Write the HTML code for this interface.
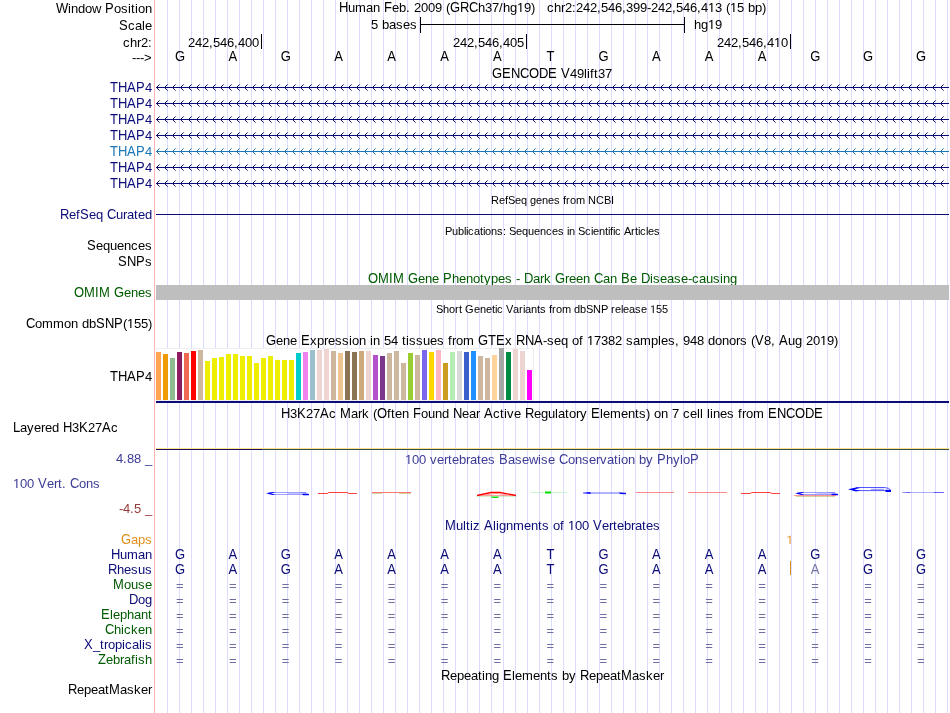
<!DOCTYPE html>
<html><head><meta charset="utf-8"><style>
html,body{margin:0;padding:0;background:#fff;width:950px;height:713px;overflow:hidden}
svg{display:block;font-family:"Liberation Sans",sans-serif;will-change:transform}
</style></head><body>
<svg width="950" height="713" viewBox="0 0 950 713">
<rect x="167" y="0" width="1" height="713" fill="#dcdcff"/>
<rect x="179" y="0" width="1" height="713" fill="#dcdcff"/>
<rect x="191" y="0" width="1" height="713" fill="#dcdcff"/>
<rect x="203" y="0" width="1" height="713" fill="#dcdcff"/>
<rect x="215" y="0" width="1" height="713" fill="#dcdcff"/>
<rect x="227" y="0" width="1" height="713" fill="#dcdcff"/>
<rect x="239" y="0" width="1" height="713" fill="#dcdcff"/>
<rect x="251" y="0" width="1" height="713" fill="#dcdcff"/>
<rect x="263" y="0" width="1" height="713" fill="#dcdcff"/>
<rect x="275" y="0" width="1" height="713" fill="#dcdcff"/>
<rect x="287" y="0" width="1" height="713" fill="#dcdcff"/>
<rect x="299" y="0" width="1" height="713" fill="#dcdcff"/>
<rect x="311" y="0" width="1" height="713" fill="#dcdcff"/>
<rect x="323" y="0" width="1" height="713" fill="#dcdcff"/>
<rect x="335" y="0" width="1" height="713" fill="#dcdcff"/>
<rect x="347" y="0" width="1" height="713" fill="#dcdcff"/>
<rect x="359" y="0" width="1" height="713" fill="#dcdcff"/>
<rect x="371" y="0" width="1" height="713" fill="#dcdcff"/>
<rect x="383" y="0" width="1" height="713" fill="#dcdcff"/>
<rect x="395" y="0" width="1" height="713" fill="#dcdcff"/>
<rect x="407" y="0" width="1" height="713" fill="#dcdcff"/>
<rect x="419" y="0" width="1" height="713" fill="#dcdcff"/>
<rect x="431" y="0" width="1" height="713" fill="#dcdcff"/>
<rect x="443" y="0" width="1" height="713" fill="#dcdcff"/>
<rect x="455" y="0" width="1" height="713" fill="#dcdcff"/>
<rect x="467" y="0" width="1" height="713" fill="#dcdcff"/>
<rect x="479" y="0" width="1" height="713" fill="#dcdcff"/>
<rect x="491" y="0" width="1" height="713" fill="#dcdcff"/>
<rect x="503" y="0" width="1" height="713" fill="#dcdcff"/>
<rect x="515" y="0" width="1" height="713" fill="#dcdcff"/>
<rect x="527" y="0" width="1" height="713" fill="#dcdcff"/>
<rect x="539" y="0" width="1" height="713" fill="#dcdcff"/>
<rect x="551" y="0" width="1" height="713" fill="#dcdcff"/>
<rect x="563" y="0" width="1" height="713" fill="#dcdcff"/>
<rect x="575" y="0" width="1" height="713" fill="#dcdcff"/>
<rect x="587" y="0" width="1" height="713" fill="#dcdcff"/>
<rect x="599" y="0" width="1" height="713" fill="#dcdcff"/>
<rect x="611" y="0" width="1" height="713" fill="#dcdcff"/>
<rect x="623" y="0" width="1" height="713" fill="#dcdcff"/>
<rect x="635" y="0" width="1" height="713" fill="#dcdcff"/>
<rect x="647" y="0" width="1" height="713" fill="#dcdcff"/>
<rect x="659" y="0" width="1" height="713" fill="#dcdcff"/>
<rect x="671" y="0" width="1" height="713" fill="#dcdcff"/>
<rect x="683" y="0" width="1" height="713" fill="#dcdcff"/>
<rect x="695" y="0" width="1" height="713" fill="#dcdcff"/>
<rect x="707" y="0" width="1" height="713" fill="#dcdcff"/>
<rect x="719" y="0" width="1" height="713" fill="#dcdcff"/>
<rect x="731" y="0" width="1" height="713" fill="#dcdcff"/>
<rect x="743" y="0" width="1" height="713" fill="#dcdcff"/>
<rect x="755" y="0" width="1" height="713" fill="#dcdcff"/>
<rect x="767" y="0" width="1" height="713" fill="#dcdcff"/>
<rect x="779" y="0" width="1" height="713" fill="#dcdcff"/>
<rect x="791" y="0" width="1" height="713" fill="#dcdcff"/>
<rect x="803" y="0" width="1" height="713" fill="#dcdcff"/>
<rect x="815" y="0" width="1" height="713" fill="#dcdcff"/>
<rect x="827" y="0" width="1" height="713" fill="#dcdcff"/>
<rect x="839" y="0" width="1" height="713" fill="#dcdcff"/>
<rect x="851" y="0" width="1" height="713" fill="#dcdcff"/>
<rect x="863" y="0" width="1" height="713" fill="#dcdcff"/>
<rect x="875" y="0" width="1" height="713" fill="#dcdcff"/>
<rect x="887" y="0" width="1" height="713" fill="#dcdcff"/>
<rect x="899" y="0" width="1" height="713" fill="#dcdcff"/>
<rect x="911" y="0" width="1" height="713" fill="#dcdcff"/>
<rect x="923" y="0" width="1" height="713" fill="#dcdcff"/>
<rect x="935" y="0" width="1" height="713" fill="#dcdcff"/>
<rect x="947" y="0" width="1" height="713" fill="#dcdcff"/>
<rect x="154" y="0" width="1" height="713" fill="#ffb4b4"/>
<text x="68 71 78 85 92 114 121 128 131 135 138 145" y="13" fill="#000" font-size="13">indowosition</text>
<text transform="matrix(1 0 0 1.08 0 -1.040)" x="56 105" y="13" fill="#000" font-size="13">WP</text>
<path d="M515 0L515 1237L197 1010L197 1180L530 1409L696 1409L696 0Z" transform="matrix(0.006348 0 0 -0.006348 517 12)" fill="#000"/>
<text x="348 355 366 373 392 399 406 414 421 428 435 446 478 485 492 499 503 510 524 531" y="12" fill="#000" font-size="13">umaneb.2009(h37/hg9)</text>
<text transform="matrix(1 0 0 1.08 0 -0.960)" x="339 384 450 460 469" y="12" fill="#000" font-size="13">HFGRC</text>
<path d="M515 0L515 1237L197 1010L197 1180L530 1409L696 1409L696 0Z" transform="matrix(0.006348 0 0 -0.006348 708 12)" fill="#000"/>
<path d="M515 0L515 1237L197 1010L197 1180L530 1409L696 1409L696 0Z" transform="matrix(0.006348 0 0 -0.006348 730 12)" fill="#000"/>
<text x="547 554 561 565 572 576 583 590 597 601 608 615 622 626 633 640 647 651 658 665 672 676 683 690 697 701 715 726 737 748 755 762" y="12" fill="#000" font-size="13">chr2:242,546,399-242,546,43(5bp)</text>
<text x="128 135 142 145" y="30" fill="#000" font-size="13">cale</text>
<text transform="matrix(1 0 0 1.08 0 -2.400)" x="119" y="30" fill="#000" font-size="13">S</text>
<text x="371 382 389 396 403 410" y="29" fill="#000" font-size="13">5bases</text>
<rect x="420" y="24" width="265" height="1" fill="#000"/>
<rect x="420" y="17" width="1" height="16" fill="#000"/>
<rect x="684" y="17" width="1" height="16" fill="#000"/>
<path d="M515 0L515 1237L197 1010L197 1180L530 1409L696 1409L696 0Z" transform="matrix(0.006348 0 0 -0.006348 708 29)" fill="#000"/>
<text x="694 701 715" y="29" fill="#000" font-size="13">hg9</text>
<text x="123 130 137 141 148" y="47" fill="#000" font-size="13">chr2:</text>
<text x="188 195 202 209 213 220 227 234 238 245 252" y="47" fill="#000" font-size="13">242,546,400</text>
<rect x="261" y="34" width="1" height="15" fill="#000"/>
<text x="453 460 467 474 478 485 492 499 503 510 517" y="47" fill="#000" font-size="13">242,546,405</text>
<rect x="526" y="34" width="1" height="15" fill="#000"/>
<path d="M515 0L515 1237L197 1010L197 1180L530 1409L696 1409L696 0Z" transform="matrix(0.006348 0 0 -0.006348 774 47)" fill="#000"/>
<text x="717 724 731 738 742 749 756 763 767 781" y="47" fill="#000" font-size="13">242,546,40</text>
<rect x="790" y="34" width="1" height="15" fill="#000"/>
<text x="132 136 140 144" y="62" fill="#000" font-size="13">---&gt;</text>
<text transform="matrix(1 0 0 1.08 0 -4.880)" x="175" y="61" fill="#000" font-size="13">G</text>
<text transform="matrix(1 0 0 1.08 0 -4.880)" x="228.433" y="61" fill="#000" font-size="13">A</text>
<text transform="matrix(1 0 0 1.08 0 -4.880)" x="280.867" y="61" fill="#000" font-size="13">G</text>
<text transform="matrix(1 0 0 1.08 0 -4.880)" x="334.3" y="61" fill="#000" font-size="13">A</text>
<text transform="matrix(1 0 0 1.08 0 -4.880)" x="387.233" y="61" fill="#000" font-size="13">A</text>
<text transform="matrix(1 0 0 1.08 0 -4.880)" x="440.167" y="61" fill="#000" font-size="13">A</text>
<text transform="matrix(1 0 0 1.08 0 -4.880)" x="493.1" y="61" fill="#000" font-size="13">A</text>
<text transform="matrix(1 0 0 1.08 0 -4.880)" x="546.533" y="61" fill="#000" font-size="13">T</text>
<text transform="matrix(1 0 0 1.08 0 -4.880)" x="598.467" y="61" fill="#000" font-size="13">G</text>
<text transform="matrix(1 0 0 1.08 0 -4.880)" x="651.9" y="61" fill="#000" font-size="13">A</text>
<text transform="matrix(1 0 0 1.08 0 -4.880)" x="704.833" y="61" fill="#000" font-size="13">A</text>
<text transform="matrix(1 0 0 1.08 0 -4.880)" x="757.767" y="61" fill="#000" font-size="13">A</text>
<text transform="matrix(1 0 0 1.08 0 -4.880)" x="810.2" y="61" fill="#000" font-size="13">G</text>
<text transform="matrix(1 0 0 1.08 0 -4.880)" x="863.133" y="61" fill="#000" font-size="13">G</text>
<text transform="matrix(1 0 0 1.08 0 -4.880)" x="916.067" y="61" fill="#000" font-size="13">G</text>
<text x="570 577 584 587 590 594 598 605" y="78" fill="#000" font-size="13">49lift37</text>
<text transform="matrix(1 0 0 1.08 0 -6.240)" x="492 502 511 520 529 539 548 561" y="78" fill="#000" font-size="13">GENCODEV</text>
<text x="145" y="92" fill="#0c0c78" font-size="13">4</text>
<text transform="matrix(1 0 0 1.08 0 -7.360)" x="110 118 127 136" y="92" fill="#0c0c78" font-size="13">THAP</text>
<rect x="156" y="87" width="793" height="1" fill="#0c0c78"/>
<g transform="translate(0 87)" fill="#0c0c78"><path d="M157 -1h1v3h-1zM158 -2h1v1h-1zM158 2h1v1h-1zM165 -1h1v3h-1zM166 -2h1v1h-1zM166 2h1v1h-1zM173 -1h1v3h-1zM174 -2h1v1h-1zM174 2h1v1h-1zM181 -1h1v3h-1zM182 -2h1v1h-1zM182 2h1v1h-1zM189 -1h1v3h-1zM190 -2h1v1h-1zM190 2h1v1h-1zM197 -1h1v3h-1zM198 -2h1v1h-1zM198 2h1v1h-1zM205 -1h1v3h-1zM206 -2h1v1h-1zM206 2h1v1h-1zM213 -1h1v3h-1zM214 -2h1v1h-1zM214 2h1v1h-1zM221 -1h1v3h-1zM222 -2h1v1h-1zM222 2h1v1h-1zM229 -1h1v3h-1zM230 -2h1v1h-1zM230 2h1v1h-1zM237 -1h1v3h-1zM238 -2h1v1h-1zM238 2h1v1h-1zM245 -1h1v3h-1zM246 -2h1v1h-1zM246 2h1v1h-1zM253 -1h1v3h-1zM254 -2h1v1h-1zM254 2h1v1h-1zM261 -1h1v3h-1zM262 -2h1v1h-1zM262 2h1v1h-1zM269 -1h1v3h-1zM270 -2h1v1h-1zM270 2h1v1h-1zM277 -1h1v3h-1zM278 -2h1v1h-1zM278 2h1v1h-1zM285 -1h1v3h-1zM286 -2h1v1h-1zM286 2h1v1h-1zM293 -1h1v3h-1zM294 -2h1v1h-1zM294 2h1v1h-1zM301 -1h1v3h-1zM302 -2h1v1h-1zM302 2h1v1h-1zM309 -1h1v3h-1zM310 -2h1v1h-1zM310 2h1v1h-1zM317 -1h1v3h-1zM318 -2h1v1h-1zM318 2h1v1h-1zM325 -1h1v3h-1zM326 -2h1v1h-1zM326 2h1v1h-1zM333 -1h1v3h-1zM334 -2h1v1h-1zM334 2h1v1h-1zM341 -1h1v3h-1zM342 -2h1v1h-1zM342 2h1v1h-1zM349 -1h1v3h-1zM350 -2h1v1h-1zM350 2h1v1h-1zM357 -1h1v3h-1zM358 -2h1v1h-1zM358 2h1v1h-1zM365 -1h1v3h-1zM366 -2h1v1h-1zM366 2h1v1h-1zM373 -1h1v3h-1zM374 -2h1v1h-1zM374 2h1v1h-1zM381 -1h1v3h-1zM382 -2h1v1h-1zM382 2h1v1h-1zM389 -1h1v3h-1zM390 -2h1v1h-1zM390 2h1v1h-1zM397 -1h1v3h-1zM398 -2h1v1h-1zM398 2h1v1h-1zM405 -1h1v3h-1zM406 -2h1v1h-1zM406 2h1v1h-1zM413 -1h1v3h-1zM414 -2h1v1h-1zM414 2h1v1h-1zM421 -1h1v3h-1zM422 -2h1v1h-1zM422 2h1v1h-1zM429 -1h1v3h-1zM430 -2h1v1h-1zM430 2h1v1h-1zM437 -1h1v3h-1zM438 -2h1v1h-1zM438 2h1v1h-1zM445 -1h1v3h-1zM446 -2h1v1h-1zM446 2h1v1h-1zM453 -1h1v3h-1zM454 -2h1v1h-1zM454 2h1v1h-1zM461 -1h1v3h-1zM462 -2h1v1h-1zM462 2h1v1h-1zM469 -1h1v3h-1zM470 -2h1v1h-1zM470 2h1v1h-1zM477 -1h1v3h-1zM478 -2h1v1h-1zM478 2h1v1h-1zM485 -1h1v3h-1zM486 -2h1v1h-1zM486 2h1v1h-1zM493 -1h1v3h-1zM494 -2h1v1h-1zM494 2h1v1h-1zM501 -1h1v3h-1zM502 -2h1v1h-1zM502 2h1v1h-1zM509 -1h1v3h-1zM510 -2h1v1h-1zM510 2h1v1h-1zM517 -1h1v3h-1zM518 -2h1v1h-1zM518 2h1v1h-1zM525 -1h1v3h-1zM526 -2h1v1h-1zM526 2h1v1h-1zM533 -1h1v3h-1zM534 -2h1v1h-1zM534 2h1v1h-1zM541 -1h1v3h-1zM542 -2h1v1h-1zM542 2h1v1h-1zM549 -1h1v3h-1zM550 -2h1v1h-1zM550 2h1v1h-1zM557 -1h1v3h-1zM558 -2h1v1h-1zM558 2h1v1h-1zM565 -1h1v3h-1zM566 -2h1v1h-1zM566 2h1v1h-1zM573 -1h1v3h-1zM574 -2h1v1h-1zM574 2h1v1h-1zM581 -1h1v3h-1zM582 -2h1v1h-1zM582 2h1v1h-1zM589 -1h1v3h-1zM590 -2h1v1h-1zM590 2h1v1h-1zM597 -1h1v3h-1zM598 -2h1v1h-1zM598 2h1v1h-1zM605 -1h1v3h-1zM606 -2h1v1h-1zM606 2h1v1h-1zM613 -1h1v3h-1zM614 -2h1v1h-1zM614 2h1v1h-1zM621 -1h1v3h-1zM622 -2h1v1h-1zM622 2h1v1h-1zM629 -1h1v3h-1zM630 -2h1v1h-1zM630 2h1v1h-1zM637 -1h1v3h-1zM638 -2h1v1h-1zM638 2h1v1h-1zM645 -1h1v3h-1zM646 -2h1v1h-1zM646 2h1v1h-1zM653 -1h1v3h-1zM654 -2h1v1h-1zM654 2h1v1h-1zM661 -1h1v3h-1zM662 -2h1v1h-1zM662 2h1v1h-1zM669 -1h1v3h-1zM670 -2h1v1h-1zM670 2h1v1h-1zM677 -1h1v3h-1zM678 -2h1v1h-1zM678 2h1v1h-1zM685 -1h1v3h-1zM686 -2h1v1h-1zM686 2h1v1h-1zM693 -1h1v3h-1zM694 -2h1v1h-1zM694 2h1v1h-1zM701 -1h1v3h-1zM702 -2h1v1h-1zM702 2h1v1h-1zM709 -1h1v3h-1zM710 -2h1v1h-1zM710 2h1v1h-1zM717 -1h1v3h-1zM718 -2h1v1h-1zM718 2h1v1h-1zM725 -1h1v3h-1zM726 -2h1v1h-1zM726 2h1v1h-1zM733 -1h1v3h-1zM734 -2h1v1h-1zM734 2h1v1h-1zM741 -1h1v3h-1zM742 -2h1v1h-1zM742 2h1v1h-1zM749 -1h1v3h-1zM750 -2h1v1h-1zM750 2h1v1h-1zM757 -1h1v3h-1zM758 -2h1v1h-1zM758 2h1v1h-1zM765 -1h1v3h-1zM766 -2h1v1h-1zM766 2h1v1h-1zM773 -1h1v3h-1zM774 -2h1v1h-1zM774 2h1v1h-1zM781 -1h1v3h-1zM782 -2h1v1h-1zM782 2h1v1h-1zM789 -1h1v3h-1zM790 -2h1v1h-1zM790 2h1v1h-1zM797 -1h1v3h-1zM798 -2h1v1h-1zM798 2h1v1h-1zM805 -1h1v3h-1zM806 -2h1v1h-1zM806 2h1v1h-1zM813 -1h1v3h-1zM814 -2h1v1h-1zM814 2h1v1h-1zM821 -1h1v3h-1zM822 -2h1v1h-1zM822 2h1v1h-1zM829 -1h1v3h-1zM830 -2h1v1h-1zM830 2h1v1h-1zM837 -1h1v3h-1zM838 -2h1v1h-1zM838 2h1v1h-1zM845 -1h1v3h-1zM846 -2h1v1h-1zM846 2h1v1h-1zM853 -1h1v3h-1zM854 -2h1v1h-1zM854 2h1v1h-1zM861 -1h1v3h-1zM862 -2h1v1h-1zM862 2h1v1h-1zM869 -1h1v3h-1zM870 -2h1v1h-1zM870 2h1v1h-1zM877 -1h1v3h-1zM878 -2h1v1h-1zM878 2h1v1h-1zM885 -1h1v3h-1zM886 -2h1v1h-1zM886 2h1v1h-1zM893 -1h1v3h-1zM894 -2h1v1h-1zM894 2h1v1h-1zM901 -1h1v3h-1zM902 -2h1v1h-1zM902 2h1v1h-1zM909 -1h1v3h-1zM910 -2h1v1h-1zM910 2h1v1h-1zM917 -1h1v3h-1zM918 -2h1v1h-1zM918 2h1v1h-1zM925 -1h1v3h-1zM926 -2h1v1h-1zM926 2h1v1h-1zM933 -1h1v3h-1zM934 -2h1v1h-1zM934 2h1v1h-1zM941 -1h1v3h-1zM942 -2h1v1h-1zM942 2h1v1h-1z"/><path d="M159 -3h1v1h-1zM159 3h1v1h-1zM167 -3h1v1h-1zM167 3h1v1h-1zM175 -3h1v1h-1zM175 3h1v1h-1zM183 -3h1v1h-1zM183 3h1v1h-1zM191 -3h1v1h-1zM191 3h1v1h-1zM199 -3h1v1h-1zM199 3h1v1h-1zM207 -3h1v1h-1zM207 3h1v1h-1zM215 -3h1v1h-1zM215 3h1v1h-1zM223 -3h1v1h-1zM223 3h1v1h-1zM231 -3h1v1h-1zM231 3h1v1h-1zM239 -3h1v1h-1zM239 3h1v1h-1zM247 -3h1v1h-1zM247 3h1v1h-1zM255 -3h1v1h-1zM255 3h1v1h-1zM263 -3h1v1h-1zM263 3h1v1h-1zM271 -3h1v1h-1zM271 3h1v1h-1zM279 -3h1v1h-1zM279 3h1v1h-1zM287 -3h1v1h-1zM287 3h1v1h-1zM295 -3h1v1h-1zM295 3h1v1h-1zM303 -3h1v1h-1zM303 3h1v1h-1zM311 -3h1v1h-1zM311 3h1v1h-1zM319 -3h1v1h-1zM319 3h1v1h-1zM327 -3h1v1h-1zM327 3h1v1h-1zM335 -3h1v1h-1zM335 3h1v1h-1zM343 -3h1v1h-1zM343 3h1v1h-1zM351 -3h1v1h-1zM351 3h1v1h-1zM359 -3h1v1h-1zM359 3h1v1h-1zM367 -3h1v1h-1zM367 3h1v1h-1zM375 -3h1v1h-1zM375 3h1v1h-1zM383 -3h1v1h-1zM383 3h1v1h-1zM391 -3h1v1h-1zM391 3h1v1h-1zM399 -3h1v1h-1zM399 3h1v1h-1zM407 -3h1v1h-1zM407 3h1v1h-1zM415 -3h1v1h-1zM415 3h1v1h-1zM423 -3h1v1h-1zM423 3h1v1h-1zM431 -3h1v1h-1zM431 3h1v1h-1zM439 -3h1v1h-1zM439 3h1v1h-1zM447 -3h1v1h-1zM447 3h1v1h-1zM455 -3h1v1h-1zM455 3h1v1h-1zM463 -3h1v1h-1zM463 3h1v1h-1zM471 -3h1v1h-1zM471 3h1v1h-1zM479 -3h1v1h-1zM479 3h1v1h-1zM487 -3h1v1h-1zM487 3h1v1h-1zM495 -3h1v1h-1zM495 3h1v1h-1zM503 -3h1v1h-1zM503 3h1v1h-1zM511 -3h1v1h-1zM511 3h1v1h-1zM519 -3h1v1h-1zM519 3h1v1h-1zM527 -3h1v1h-1zM527 3h1v1h-1zM535 -3h1v1h-1zM535 3h1v1h-1zM543 -3h1v1h-1zM543 3h1v1h-1zM551 -3h1v1h-1zM551 3h1v1h-1zM559 -3h1v1h-1zM559 3h1v1h-1zM567 -3h1v1h-1zM567 3h1v1h-1zM575 -3h1v1h-1zM575 3h1v1h-1zM583 -3h1v1h-1zM583 3h1v1h-1zM591 -3h1v1h-1zM591 3h1v1h-1zM599 -3h1v1h-1zM599 3h1v1h-1zM607 -3h1v1h-1zM607 3h1v1h-1zM615 -3h1v1h-1zM615 3h1v1h-1zM623 -3h1v1h-1zM623 3h1v1h-1zM631 -3h1v1h-1zM631 3h1v1h-1zM639 -3h1v1h-1zM639 3h1v1h-1zM647 -3h1v1h-1zM647 3h1v1h-1zM655 -3h1v1h-1zM655 3h1v1h-1zM663 -3h1v1h-1zM663 3h1v1h-1zM671 -3h1v1h-1zM671 3h1v1h-1zM679 -3h1v1h-1zM679 3h1v1h-1zM687 -3h1v1h-1zM687 3h1v1h-1zM695 -3h1v1h-1zM695 3h1v1h-1zM703 -3h1v1h-1zM703 3h1v1h-1zM711 -3h1v1h-1zM711 3h1v1h-1zM719 -3h1v1h-1zM719 3h1v1h-1zM727 -3h1v1h-1zM727 3h1v1h-1zM735 -3h1v1h-1zM735 3h1v1h-1zM743 -3h1v1h-1zM743 3h1v1h-1zM751 -3h1v1h-1zM751 3h1v1h-1zM759 -3h1v1h-1zM759 3h1v1h-1zM767 -3h1v1h-1zM767 3h1v1h-1zM775 -3h1v1h-1zM775 3h1v1h-1zM783 -3h1v1h-1zM783 3h1v1h-1zM791 -3h1v1h-1zM791 3h1v1h-1zM799 -3h1v1h-1zM799 3h1v1h-1zM807 -3h1v1h-1zM807 3h1v1h-1zM815 -3h1v1h-1zM815 3h1v1h-1zM823 -3h1v1h-1zM823 3h1v1h-1zM831 -3h1v1h-1zM831 3h1v1h-1zM839 -3h1v1h-1zM839 3h1v1h-1zM847 -3h1v1h-1zM847 3h1v1h-1zM855 -3h1v1h-1zM855 3h1v1h-1zM863 -3h1v1h-1zM863 3h1v1h-1zM871 -3h1v1h-1zM871 3h1v1h-1zM879 -3h1v1h-1zM879 3h1v1h-1zM887 -3h1v1h-1zM887 3h1v1h-1zM895 -3h1v1h-1zM895 3h1v1h-1zM903 -3h1v1h-1zM903 3h1v1h-1zM911 -3h1v1h-1zM911 3h1v1h-1zM919 -3h1v1h-1zM919 3h1v1h-1zM927 -3h1v1h-1zM927 3h1v1h-1zM935 -3h1v1h-1zM935 3h1v1h-1zM943 -3h1v1h-1zM943 3h1v1h-1z" fill-opacity="0.6"/></g>
<text x="145" y="108" fill="#0c0c78" font-size="13">4</text>
<text transform="matrix(1 0 0 1.08 0 -8.640)" x="110 118 127 136" y="108" fill="#0c0c78" font-size="13">THAP</text>
<rect x="156" y="103" width="793" height="1" fill="#0c0c78"/>
<g transform="translate(0 103)" fill="#0c0c78"><path d="M157 -1h1v3h-1zM158 -2h1v1h-1zM158 2h1v1h-1zM165 -1h1v3h-1zM166 -2h1v1h-1zM166 2h1v1h-1zM173 -1h1v3h-1zM174 -2h1v1h-1zM174 2h1v1h-1zM181 -1h1v3h-1zM182 -2h1v1h-1zM182 2h1v1h-1zM189 -1h1v3h-1zM190 -2h1v1h-1zM190 2h1v1h-1zM197 -1h1v3h-1zM198 -2h1v1h-1zM198 2h1v1h-1zM205 -1h1v3h-1zM206 -2h1v1h-1zM206 2h1v1h-1zM213 -1h1v3h-1zM214 -2h1v1h-1zM214 2h1v1h-1zM221 -1h1v3h-1zM222 -2h1v1h-1zM222 2h1v1h-1zM229 -1h1v3h-1zM230 -2h1v1h-1zM230 2h1v1h-1zM237 -1h1v3h-1zM238 -2h1v1h-1zM238 2h1v1h-1zM245 -1h1v3h-1zM246 -2h1v1h-1zM246 2h1v1h-1zM253 -1h1v3h-1zM254 -2h1v1h-1zM254 2h1v1h-1zM261 -1h1v3h-1zM262 -2h1v1h-1zM262 2h1v1h-1zM269 -1h1v3h-1zM270 -2h1v1h-1zM270 2h1v1h-1zM277 -1h1v3h-1zM278 -2h1v1h-1zM278 2h1v1h-1zM285 -1h1v3h-1zM286 -2h1v1h-1zM286 2h1v1h-1zM293 -1h1v3h-1zM294 -2h1v1h-1zM294 2h1v1h-1zM301 -1h1v3h-1zM302 -2h1v1h-1zM302 2h1v1h-1zM309 -1h1v3h-1zM310 -2h1v1h-1zM310 2h1v1h-1zM317 -1h1v3h-1zM318 -2h1v1h-1zM318 2h1v1h-1zM325 -1h1v3h-1zM326 -2h1v1h-1zM326 2h1v1h-1zM333 -1h1v3h-1zM334 -2h1v1h-1zM334 2h1v1h-1zM341 -1h1v3h-1zM342 -2h1v1h-1zM342 2h1v1h-1zM349 -1h1v3h-1zM350 -2h1v1h-1zM350 2h1v1h-1zM357 -1h1v3h-1zM358 -2h1v1h-1zM358 2h1v1h-1zM365 -1h1v3h-1zM366 -2h1v1h-1zM366 2h1v1h-1zM373 -1h1v3h-1zM374 -2h1v1h-1zM374 2h1v1h-1zM381 -1h1v3h-1zM382 -2h1v1h-1zM382 2h1v1h-1zM389 -1h1v3h-1zM390 -2h1v1h-1zM390 2h1v1h-1zM397 -1h1v3h-1zM398 -2h1v1h-1zM398 2h1v1h-1zM405 -1h1v3h-1zM406 -2h1v1h-1zM406 2h1v1h-1zM413 -1h1v3h-1zM414 -2h1v1h-1zM414 2h1v1h-1zM421 -1h1v3h-1zM422 -2h1v1h-1zM422 2h1v1h-1zM429 -1h1v3h-1zM430 -2h1v1h-1zM430 2h1v1h-1zM437 -1h1v3h-1zM438 -2h1v1h-1zM438 2h1v1h-1zM445 -1h1v3h-1zM446 -2h1v1h-1zM446 2h1v1h-1zM453 -1h1v3h-1zM454 -2h1v1h-1zM454 2h1v1h-1zM461 -1h1v3h-1zM462 -2h1v1h-1zM462 2h1v1h-1zM469 -1h1v3h-1zM470 -2h1v1h-1zM470 2h1v1h-1zM477 -1h1v3h-1zM478 -2h1v1h-1zM478 2h1v1h-1zM485 -1h1v3h-1zM486 -2h1v1h-1zM486 2h1v1h-1zM493 -1h1v3h-1zM494 -2h1v1h-1zM494 2h1v1h-1zM501 -1h1v3h-1zM502 -2h1v1h-1zM502 2h1v1h-1zM509 -1h1v3h-1zM510 -2h1v1h-1zM510 2h1v1h-1zM517 -1h1v3h-1zM518 -2h1v1h-1zM518 2h1v1h-1zM525 -1h1v3h-1zM526 -2h1v1h-1zM526 2h1v1h-1zM533 -1h1v3h-1zM534 -2h1v1h-1zM534 2h1v1h-1zM541 -1h1v3h-1zM542 -2h1v1h-1zM542 2h1v1h-1zM549 -1h1v3h-1zM550 -2h1v1h-1zM550 2h1v1h-1zM557 -1h1v3h-1zM558 -2h1v1h-1zM558 2h1v1h-1zM565 -1h1v3h-1zM566 -2h1v1h-1zM566 2h1v1h-1zM573 -1h1v3h-1zM574 -2h1v1h-1zM574 2h1v1h-1zM581 -1h1v3h-1zM582 -2h1v1h-1zM582 2h1v1h-1zM589 -1h1v3h-1zM590 -2h1v1h-1zM590 2h1v1h-1zM597 -1h1v3h-1zM598 -2h1v1h-1zM598 2h1v1h-1zM605 -1h1v3h-1zM606 -2h1v1h-1zM606 2h1v1h-1zM613 -1h1v3h-1zM614 -2h1v1h-1zM614 2h1v1h-1zM621 -1h1v3h-1zM622 -2h1v1h-1zM622 2h1v1h-1zM629 -1h1v3h-1zM630 -2h1v1h-1zM630 2h1v1h-1zM637 -1h1v3h-1zM638 -2h1v1h-1zM638 2h1v1h-1zM645 -1h1v3h-1zM646 -2h1v1h-1zM646 2h1v1h-1zM653 -1h1v3h-1zM654 -2h1v1h-1zM654 2h1v1h-1zM661 -1h1v3h-1zM662 -2h1v1h-1zM662 2h1v1h-1zM669 -1h1v3h-1zM670 -2h1v1h-1zM670 2h1v1h-1zM677 -1h1v3h-1zM678 -2h1v1h-1zM678 2h1v1h-1zM685 -1h1v3h-1zM686 -2h1v1h-1zM686 2h1v1h-1zM693 -1h1v3h-1zM694 -2h1v1h-1zM694 2h1v1h-1zM701 -1h1v3h-1zM702 -2h1v1h-1zM702 2h1v1h-1zM709 -1h1v3h-1zM710 -2h1v1h-1zM710 2h1v1h-1zM717 -1h1v3h-1zM718 -2h1v1h-1zM718 2h1v1h-1zM725 -1h1v3h-1zM726 -2h1v1h-1zM726 2h1v1h-1zM733 -1h1v3h-1zM734 -2h1v1h-1zM734 2h1v1h-1zM741 -1h1v3h-1zM742 -2h1v1h-1zM742 2h1v1h-1zM749 -1h1v3h-1zM750 -2h1v1h-1zM750 2h1v1h-1zM757 -1h1v3h-1zM758 -2h1v1h-1zM758 2h1v1h-1zM765 -1h1v3h-1zM766 -2h1v1h-1zM766 2h1v1h-1zM773 -1h1v3h-1zM774 -2h1v1h-1zM774 2h1v1h-1zM781 -1h1v3h-1zM782 -2h1v1h-1zM782 2h1v1h-1zM789 -1h1v3h-1zM790 -2h1v1h-1zM790 2h1v1h-1zM797 -1h1v3h-1zM798 -2h1v1h-1zM798 2h1v1h-1zM805 -1h1v3h-1zM806 -2h1v1h-1zM806 2h1v1h-1zM813 -1h1v3h-1zM814 -2h1v1h-1zM814 2h1v1h-1zM821 -1h1v3h-1zM822 -2h1v1h-1zM822 2h1v1h-1zM829 -1h1v3h-1zM830 -2h1v1h-1zM830 2h1v1h-1zM837 -1h1v3h-1zM838 -2h1v1h-1zM838 2h1v1h-1zM845 -1h1v3h-1zM846 -2h1v1h-1zM846 2h1v1h-1zM853 -1h1v3h-1zM854 -2h1v1h-1zM854 2h1v1h-1zM861 -1h1v3h-1zM862 -2h1v1h-1zM862 2h1v1h-1zM869 -1h1v3h-1zM870 -2h1v1h-1zM870 2h1v1h-1zM877 -1h1v3h-1zM878 -2h1v1h-1zM878 2h1v1h-1zM885 -1h1v3h-1zM886 -2h1v1h-1zM886 2h1v1h-1zM893 -1h1v3h-1zM894 -2h1v1h-1zM894 2h1v1h-1zM901 -1h1v3h-1zM902 -2h1v1h-1zM902 2h1v1h-1zM909 -1h1v3h-1zM910 -2h1v1h-1zM910 2h1v1h-1zM917 -1h1v3h-1zM918 -2h1v1h-1zM918 2h1v1h-1zM925 -1h1v3h-1zM926 -2h1v1h-1zM926 2h1v1h-1zM933 -1h1v3h-1zM934 -2h1v1h-1zM934 2h1v1h-1zM941 -1h1v3h-1zM942 -2h1v1h-1zM942 2h1v1h-1z"/><path d="M159 -3h1v1h-1zM159 3h1v1h-1zM167 -3h1v1h-1zM167 3h1v1h-1zM175 -3h1v1h-1zM175 3h1v1h-1zM183 -3h1v1h-1zM183 3h1v1h-1zM191 -3h1v1h-1zM191 3h1v1h-1zM199 -3h1v1h-1zM199 3h1v1h-1zM207 -3h1v1h-1zM207 3h1v1h-1zM215 -3h1v1h-1zM215 3h1v1h-1zM223 -3h1v1h-1zM223 3h1v1h-1zM231 -3h1v1h-1zM231 3h1v1h-1zM239 -3h1v1h-1zM239 3h1v1h-1zM247 -3h1v1h-1zM247 3h1v1h-1zM255 -3h1v1h-1zM255 3h1v1h-1zM263 -3h1v1h-1zM263 3h1v1h-1zM271 -3h1v1h-1zM271 3h1v1h-1zM279 -3h1v1h-1zM279 3h1v1h-1zM287 -3h1v1h-1zM287 3h1v1h-1zM295 -3h1v1h-1zM295 3h1v1h-1zM303 -3h1v1h-1zM303 3h1v1h-1zM311 -3h1v1h-1zM311 3h1v1h-1zM319 -3h1v1h-1zM319 3h1v1h-1zM327 -3h1v1h-1zM327 3h1v1h-1zM335 -3h1v1h-1zM335 3h1v1h-1zM343 -3h1v1h-1zM343 3h1v1h-1zM351 -3h1v1h-1zM351 3h1v1h-1zM359 -3h1v1h-1zM359 3h1v1h-1zM367 -3h1v1h-1zM367 3h1v1h-1zM375 -3h1v1h-1zM375 3h1v1h-1zM383 -3h1v1h-1zM383 3h1v1h-1zM391 -3h1v1h-1zM391 3h1v1h-1zM399 -3h1v1h-1zM399 3h1v1h-1zM407 -3h1v1h-1zM407 3h1v1h-1zM415 -3h1v1h-1zM415 3h1v1h-1zM423 -3h1v1h-1zM423 3h1v1h-1zM431 -3h1v1h-1zM431 3h1v1h-1zM439 -3h1v1h-1zM439 3h1v1h-1zM447 -3h1v1h-1zM447 3h1v1h-1zM455 -3h1v1h-1zM455 3h1v1h-1zM463 -3h1v1h-1zM463 3h1v1h-1zM471 -3h1v1h-1zM471 3h1v1h-1zM479 -3h1v1h-1zM479 3h1v1h-1zM487 -3h1v1h-1zM487 3h1v1h-1zM495 -3h1v1h-1zM495 3h1v1h-1zM503 -3h1v1h-1zM503 3h1v1h-1zM511 -3h1v1h-1zM511 3h1v1h-1zM519 -3h1v1h-1zM519 3h1v1h-1zM527 -3h1v1h-1zM527 3h1v1h-1zM535 -3h1v1h-1zM535 3h1v1h-1zM543 -3h1v1h-1zM543 3h1v1h-1zM551 -3h1v1h-1zM551 3h1v1h-1zM559 -3h1v1h-1zM559 3h1v1h-1zM567 -3h1v1h-1zM567 3h1v1h-1zM575 -3h1v1h-1zM575 3h1v1h-1zM583 -3h1v1h-1zM583 3h1v1h-1zM591 -3h1v1h-1zM591 3h1v1h-1zM599 -3h1v1h-1zM599 3h1v1h-1zM607 -3h1v1h-1zM607 3h1v1h-1zM615 -3h1v1h-1zM615 3h1v1h-1zM623 -3h1v1h-1zM623 3h1v1h-1zM631 -3h1v1h-1zM631 3h1v1h-1zM639 -3h1v1h-1zM639 3h1v1h-1zM647 -3h1v1h-1zM647 3h1v1h-1zM655 -3h1v1h-1zM655 3h1v1h-1zM663 -3h1v1h-1zM663 3h1v1h-1zM671 -3h1v1h-1zM671 3h1v1h-1zM679 -3h1v1h-1zM679 3h1v1h-1zM687 -3h1v1h-1zM687 3h1v1h-1zM695 -3h1v1h-1zM695 3h1v1h-1zM703 -3h1v1h-1zM703 3h1v1h-1zM711 -3h1v1h-1zM711 3h1v1h-1zM719 -3h1v1h-1zM719 3h1v1h-1zM727 -3h1v1h-1zM727 3h1v1h-1zM735 -3h1v1h-1zM735 3h1v1h-1zM743 -3h1v1h-1zM743 3h1v1h-1zM751 -3h1v1h-1zM751 3h1v1h-1zM759 -3h1v1h-1zM759 3h1v1h-1zM767 -3h1v1h-1zM767 3h1v1h-1zM775 -3h1v1h-1zM775 3h1v1h-1zM783 -3h1v1h-1zM783 3h1v1h-1zM791 -3h1v1h-1zM791 3h1v1h-1zM799 -3h1v1h-1zM799 3h1v1h-1zM807 -3h1v1h-1zM807 3h1v1h-1zM815 -3h1v1h-1zM815 3h1v1h-1zM823 -3h1v1h-1zM823 3h1v1h-1zM831 -3h1v1h-1zM831 3h1v1h-1zM839 -3h1v1h-1zM839 3h1v1h-1zM847 -3h1v1h-1zM847 3h1v1h-1zM855 -3h1v1h-1zM855 3h1v1h-1zM863 -3h1v1h-1zM863 3h1v1h-1zM871 -3h1v1h-1zM871 3h1v1h-1zM879 -3h1v1h-1zM879 3h1v1h-1zM887 -3h1v1h-1zM887 3h1v1h-1zM895 -3h1v1h-1zM895 3h1v1h-1zM903 -3h1v1h-1zM903 3h1v1h-1zM911 -3h1v1h-1zM911 3h1v1h-1zM919 -3h1v1h-1zM919 3h1v1h-1zM927 -3h1v1h-1zM927 3h1v1h-1zM935 -3h1v1h-1zM935 3h1v1h-1zM943 -3h1v1h-1zM943 3h1v1h-1z" fill-opacity="0.6"/></g>
<text x="145" y="124" fill="#0c0c78" font-size="13">4</text>
<text transform="matrix(1 0 0 1.08 0 -9.920)" x="110 118 127 136" y="124" fill="#0c0c78" font-size="13">THAP</text>
<rect x="156" y="119" width="793" height="1" fill="#0c0c78"/>
<g transform="translate(0 119)" fill="#0c0c78"><path d="M157 -1h1v3h-1zM158 -2h1v1h-1zM158 2h1v1h-1zM165 -1h1v3h-1zM166 -2h1v1h-1zM166 2h1v1h-1zM173 -1h1v3h-1zM174 -2h1v1h-1zM174 2h1v1h-1zM181 -1h1v3h-1zM182 -2h1v1h-1zM182 2h1v1h-1zM189 -1h1v3h-1zM190 -2h1v1h-1zM190 2h1v1h-1zM197 -1h1v3h-1zM198 -2h1v1h-1zM198 2h1v1h-1zM205 -1h1v3h-1zM206 -2h1v1h-1zM206 2h1v1h-1zM213 -1h1v3h-1zM214 -2h1v1h-1zM214 2h1v1h-1zM221 -1h1v3h-1zM222 -2h1v1h-1zM222 2h1v1h-1zM229 -1h1v3h-1zM230 -2h1v1h-1zM230 2h1v1h-1zM237 -1h1v3h-1zM238 -2h1v1h-1zM238 2h1v1h-1zM245 -1h1v3h-1zM246 -2h1v1h-1zM246 2h1v1h-1zM253 -1h1v3h-1zM254 -2h1v1h-1zM254 2h1v1h-1zM261 -1h1v3h-1zM262 -2h1v1h-1zM262 2h1v1h-1zM269 -1h1v3h-1zM270 -2h1v1h-1zM270 2h1v1h-1zM277 -1h1v3h-1zM278 -2h1v1h-1zM278 2h1v1h-1zM285 -1h1v3h-1zM286 -2h1v1h-1zM286 2h1v1h-1zM293 -1h1v3h-1zM294 -2h1v1h-1zM294 2h1v1h-1zM301 -1h1v3h-1zM302 -2h1v1h-1zM302 2h1v1h-1zM309 -1h1v3h-1zM310 -2h1v1h-1zM310 2h1v1h-1zM317 -1h1v3h-1zM318 -2h1v1h-1zM318 2h1v1h-1zM325 -1h1v3h-1zM326 -2h1v1h-1zM326 2h1v1h-1zM333 -1h1v3h-1zM334 -2h1v1h-1zM334 2h1v1h-1zM341 -1h1v3h-1zM342 -2h1v1h-1zM342 2h1v1h-1zM349 -1h1v3h-1zM350 -2h1v1h-1zM350 2h1v1h-1zM357 -1h1v3h-1zM358 -2h1v1h-1zM358 2h1v1h-1zM365 -1h1v3h-1zM366 -2h1v1h-1zM366 2h1v1h-1zM373 -1h1v3h-1zM374 -2h1v1h-1zM374 2h1v1h-1zM381 -1h1v3h-1zM382 -2h1v1h-1zM382 2h1v1h-1zM389 -1h1v3h-1zM390 -2h1v1h-1zM390 2h1v1h-1zM397 -1h1v3h-1zM398 -2h1v1h-1zM398 2h1v1h-1zM405 -1h1v3h-1zM406 -2h1v1h-1zM406 2h1v1h-1zM413 -1h1v3h-1zM414 -2h1v1h-1zM414 2h1v1h-1zM421 -1h1v3h-1zM422 -2h1v1h-1zM422 2h1v1h-1zM429 -1h1v3h-1zM430 -2h1v1h-1zM430 2h1v1h-1zM437 -1h1v3h-1zM438 -2h1v1h-1zM438 2h1v1h-1zM445 -1h1v3h-1zM446 -2h1v1h-1zM446 2h1v1h-1zM453 -1h1v3h-1zM454 -2h1v1h-1zM454 2h1v1h-1zM461 -1h1v3h-1zM462 -2h1v1h-1zM462 2h1v1h-1zM469 -1h1v3h-1zM470 -2h1v1h-1zM470 2h1v1h-1zM477 -1h1v3h-1zM478 -2h1v1h-1zM478 2h1v1h-1zM485 -1h1v3h-1zM486 -2h1v1h-1zM486 2h1v1h-1zM493 -1h1v3h-1zM494 -2h1v1h-1zM494 2h1v1h-1zM501 -1h1v3h-1zM502 -2h1v1h-1zM502 2h1v1h-1zM509 -1h1v3h-1zM510 -2h1v1h-1zM510 2h1v1h-1zM517 -1h1v3h-1zM518 -2h1v1h-1zM518 2h1v1h-1zM525 -1h1v3h-1zM526 -2h1v1h-1zM526 2h1v1h-1zM533 -1h1v3h-1zM534 -2h1v1h-1zM534 2h1v1h-1zM541 -1h1v3h-1zM542 -2h1v1h-1zM542 2h1v1h-1zM549 -1h1v3h-1zM550 -2h1v1h-1zM550 2h1v1h-1zM557 -1h1v3h-1zM558 -2h1v1h-1zM558 2h1v1h-1zM565 -1h1v3h-1zM566 -2h1v1h-1zM566 2h1v1h-1zM573 -1h1v3h-1zM574 -2h1v1h-1zM574 2h1v1h-1zM581 -1h1v3h-1zM582 -2h1v1h-1zM582 2h1v1h-1zM589 -1h1v3h-1zM590 -2h1v1h-1zM590 2h1v1h-1zM597 -1h1v3h-1zM598 -2h1v1h-1zM598 2h1v1h-1zM605 -1h1v3h-1zM606 -2h1v1h-1zM606 2h1v1h-1zM613 -1h1v3h-1zM614 -2h1v1h-1zM614 2h1v1h-1zM621 -1h1v3h-1zM622 -2h1v1h-1zM622 2h1v1h-1zM629 -1h1v3h-1zM630 -2h1v1h-1zM630 2h1v1h-1zM637 -1h1v3h-1zM638 -2h1v1h-1zM638 2h1v1h-1zM645 -1h1v3h-1zM646 -2h1v1h-1zM646 2h1v1h-1zM653 -1h1v3h-1zM654 -2h1v1h-1zM654 2h1v1h-1zM661 -1h1v3h-1zM662 -2h1v1h-1zM662 2h1v1h-1zM669 -1h1v3h-1zM670 -2h1v1h-1zM670 2h1v1h-1zM677 -1h1v3h-1zM678 -2h1v1h-1zM678 2h1v1h-1zM685 -1h1v3h-1zM686 -2h1v1h-1zM686 2h1v1h-1zM693 -1h1v3h-1zM694 -2h1v1h-1zM694 2h1v1h-1zM701 -1h1v3h-1zM702 -2h1v1h-1zM702 2h1v1h-1zM709 -1h1v3h-1zM710 -2h1v1h-1zM710 2h1v1h-1zM717 -1h1v3h-1zM718 -2h1v1h-1zM718 2h1v1h-1zM725 -1h1v3h-1zM726 -2h1v1h-1zM726 2h1v1h-1zM733 -1h1v3h-1zM734 -2h1v1h-1zM734 2h1v1h-1zM741 -1h1v3h-1zM742 -2h1v1h-1zM742 2h1v1h-1zM749 -1h1v3h-1zM750 -2h1v1h-1zM750 2h1v1h-1zM757 -1h1v3h-1zM758 -2h1v1h-1zM758 2h1v1h-1zM765 -1h1v3h-1zM766 -2h1v1h-1zM766 2h1v1h-1zM773 -1h1v3h-1zM774 -2h1v1h-1zM774 2h1v1h-1zM781 -1h1v3h-1zM782 -2h1v1h-1zM782 2h1v1h-1zM789 -1h1v3h-1zM790 -2h1v1h-1zM790 2h1v1h-1zM797 -1h1v3h-1zM798 -2h1v1h-1zM798 2h1v1h-1zM805 -1h1v3h-1zM806 -2h1v1h-1zM806 2h1v1h-1zM813 -1h1v3h-1zM814 -2h1v1h-1zM814 2h1v1h-1zM821 -1h1v3h-1zM822 -2h1v1h-1zM822 2h1v1h-1zM829 -1h1v3h-1zM830 -2h1v1h-1zM830 2h1v1h-1zM837 -1h1v3h-1zM838 -2h1v1h-1zM838 2h1v1h-1zM845 -1h1v3h-1zM846 -2h1v1h-1zM846 2h1v1h-1zM853 -1h1v3h-1zM854 -2h1v1h-1zM854 2h1v1h-1zM861 -1h1v3h-1zM862 -2h1v1h-1zM862 2h1v1h-1zM869 -1h1v3h-1zM870 -2h1v1h-1zM870 2h1v1h-1zM877 -1h1v3h-1zM878 -2h1v1h-1zM878 2h1v1h-1zM885 -1h1v3h-1zM886 -2h1v1h-1zM886 2h1v1h-1zM893 -1h1v3h-1zM894 -2h1v1h-1zM894 2h1v1h-1zM901 -1h1v3h-1zM902 -2h1v1h-1zM902 2h1v1h-1zM909 -1h1v3h-1zM910 -2h1v1h-1zM910 2h1v1h-1zM917 -1h1v3h-1zM918 -2h1v1h-1zM918 2h1v1h-1zM925 -1h1v3h-1zM926 -2h1v1h-1zM926 2h1v1h-1zM933 -1h1v3h-1zM934 -2h1v1h-1zM934 2h1v1h-1zM941 -1h1v3h-1zM942 -2h1v1h-1zM942 2h1v1h-1z"/><path d="M159 -3h1v1h-1zM159 3h1v1h-1zM167 -3h1v1h-1zM167 3h1v1h-1zM175 -3h1v1h-1zM175 3h1v1h-1zM183 -3h1v1h-1zM183 3h1v1h-1zM191 -3h1v1h-1zM191 3h1v1h-1zM199 -3h1v1h-1zM199 3h1v1h-1zM207 -3h1v1h-1zM207 3h1v1h-1zM215 -3h1v1h-1zM215 3h1v1h-1zM223 -3h1v1h-1zM223 3h1v1h-1zM231 -3h1v1h-1zM231 3h1v1h-1zM239 -3h1v1h-1zM239 3h1v1h-1zM247 -3h1v1h-1zM247 3h1v1h-1zM255 -3h1v1h-1zM255 3h1v1h-1zM263 -3h1v1h-1zM263 3h1v1h-1zM271 -3h1v1h-1zM271 3h1v1h-1zM279 -3h1v1h-1zM279 3h1v1h-1zM287 -3h1v1h-1zM287 3h1v1h-1zM295 -3h1v1h-1zM295 3h1v1h-1zM303 -3h1v1h-1zM303 3h1v1h-1zM311 -3h1v1h-1zM311 3h1v1h-1zM319 -3h1v1h-1zM319 3h1v1h-1zM327 -3h1v1h-1zM327 3h1v1h-1zM335 -3h1v1h-1zM335 3h1v1h-1zM343 -3h1v1h-1zM343 3h1v1h-1zM351 -3h1v1h-1zM351 3h1v1h-1zM359 -3h1v1h-1zM359 3h1v1h-1zM367 -3h1v1h-1zM367 3h1v1h-1zM375 -3h1v1h-1zM375 3h1v1h-1zM383 -3h1v1h-1zM383 3h1v1h-1zM391 -3h1v1h-1zM391 3h1v1h-1zM399 -3h1v1h-1zM399 3h1v1h-1zM407 -3h1v1h-1zM407 3h1v1h-1zM415 -3h1v1h-1zM415 3h1v1h-1zM423 -3h1v1h-1zM423 3h1v1h-1zM431 -3h1v1h-1zM431 3h1v1h-1zM439 -3h1v1h-1zM439 3h1v1h-1zM447 -3h1v1h-1zM447 3h1v1h-1zM455 -3h1v1h-1zM455 3h1v1h-1zM463 -3h1v1h-1zM463 3h1v1h-1zM471 -3h1v1h-1zM471 3h1v1h-1zM479 -3h1v1h-1zM479 3h1v1h-1zM487 -3h1v1h-1zM487 3h1v1h-1zM495 -3h1v1h-1zM495 3h1v1h-1zM503 -3h1v1h-1zM503 3h1v1h-1zM511 -3h1v1h-1zM511 3h1v1h-1zM519 -3h1v1h-1zM519 3h1v1h-1zM527 -3h1v1h-1zM527 3h1v1h-1zM535 -3h1v1h-1zM535 3h1v1h-1zM543 -3h1v1h-1zM543 3h1v1h-1zM551 -3h1v1h-1zM551 3h1v1h-1zM559 -3h1v1h-1zM559 3h1v1h-1zM567 -3h1v1h-1zM567 3h1v1h-1zM575 -3h1v1h-1zM575 3h1v1h-1zM583 -3h1v1h-1zM583 3h1v1h-1zM591 -3h1v1h-1zM591 3h1v1h-1zM599 -3h1v1h-1zM599 3h1v1h-1zM607 -3h1v1h-1zM607 3h1v1h-1zM615 -3h1v1h-1zM615 3h1v1h-1zM623 -3h1v1h-1zM623 3h1v1h-1zM631 -3h1v1h-1zM631 3h1v1h-1zM639 -3h1v1h-1zM639 3h1v1h-1zM647 -3h1v1h-1zM647 3h1v1h-1zM655 -3h1v1h-1zM655 3h1v1h-1zM663 -3h1v1h-1zM663 3h1v1h-1zM671 -3h1v1h-1zM671 3h1v1h-1zM679 -3h1v1h-1zM679 3h1v1h-1zM687 -3h1v1h-1zM687 3h1v1h-1zM695 -3h1v1h-1zM695 3h1v1h-1zM703 -3h1v1h-1zM703 3h1v1h-1zM711 -3h1v1h-1zM711 3h1v1h-1zM719 -3h1v1h-1zM719 3h1v1h-1zM727 -3h1v1h-1zM727 3h1v1h-1zM735 -3h1v1h-1zM735 3h1v1h-1zM743 -3h1v1h-1zM743 3h1v1h-1zM751 -3h1v1h-1zM751 3h1v1h-1zM759 -3h1v1h-1zM759 3h1v1h-1zM767 -3h1v1h-1zM767 3h1v1h-1zM775 -3h1v1h-1zM775 3h1v1h-1zM783 -3h1v1h-1zM783 3h1v1h-1zM791 -3h1v1h-1zM791 3h1v1h-1zM799 -3h1v1h-1zM799 3h1v1h-1zM807 -3h1v1h-1zM807 3h1v1h-1zM815 -3h1v1h-1zM815 3h1v1h-1zM823 -3h1v1h-1zM823 3h1v1h-1zM831 -3h1v1h-1zM831 3h1v1h-1zM839 -3h1v1h-1zM839 3h1v1h-1zM847 -3h1v1h-1zM847 3h1v1h-1zM855 -3h1v1h-1zM855 3h1v1h-1zM863 -3h1v1h-1zM863 3h1v1h-1zM871 -3h1v1h-1zM871 3h1v1h-1zM879 -3h1v1h-1zM879 3h1v1h-1zM887 -3h1v1h-1zM887 3h1v1h-1zM895 -3h1v1h-1zM895 3h1v1h-1zM903 -3h1v1h-1zM903 3h1v1h-1zM911 -3h1v1h-1zM911 3h1v1h-1zM919 -3h1v1h-1zM919 3h1v1h-1zM927 -3h1v1h-1zM927 3h1v1h-1zM935 -3h1v1h-1zM935 3h1v1h-1zM943 -3h1v1h-1zM943 3h1v1h-1z" fill-opacity="0.6"/></g>
<text x="145" y="140" fill="#0c0c78" font-size="13">4</text>
<text transform="matrix(1 0 0 1.08 0 -11.200)" x="110 118 127 136" y="140" fill="#0c0c78" font-size="13">THAP</text>
<rect x="156" y="135" width="793" height="1" fill="#0c0c78"/>
<g transform="translate(0 135)" fill="#0c0c78"><path d="M157 -1h1v3h-1zM158 -2h1v1h-1zM158 2h1v1h-1zM165 -1h1v3h-1zM166 -2h1v1h-1zM166 2h1v1h-1zM173 -1h1v3h-1zM174 -2h1v1h-1zM174 2h1v1h-1zM181 -1h1v3h-1zM182 -2h1v1h-1zM182 2h1v1h-1zM189 -1h1v3h-1zM190 -2h1v1h-1zM190 2h1v1h-1zM197 -1h1v3h-1zM198 -2h1v1h-1zM198 2h1v1h-1zM205 -1h1v3h-1zM206 -2h1v1h-1zM206 2h1v1h-1zM213 -1h1v3h-1zM214 -2h1v1h-1zM214 2h1v1h-1zM221 -1h1v3h-1zM222 -2h1v1h-1zM222 2h1v1h-1zM229 -1h1v3h-1zM230 -2h1v1h-1zM230 2h1v1h-1zM237 -1h1v3h-1zM238 -2h1v1h-1zM238 2h1v1h-1zM245 -1h1v3h-1zM246 -2h1v1h-1zM246 2h1v1h-1zM253 -1h1v3h-1zM254 -2h1v1h-1zM254 2h1v1h-1zM261 -1h1v3h-1zM262 -2h1v1h-1zM262 2h1v1h-1zM269 -1h1v3h-1zM270 -2h1v1h-1zM270 2h1v1h-1zM277 -1h1v3h-1zM278 -2h1v1h-1zM278 2h1v1h-1zM285 -1h1v3h-1zM286 -2h1v1h-1zM286 2h1v1h-1zM293 -1h1v3h-1zM294 -2h1v1h-1zM294 2h1v1h-1zM301 -1h1v3h-1zM302 -2h1v1h-1zM302 2h1v1h-1zM309 -1h1v3h-1zM310 -2h1v1h-1zM310 2h1v1h-1zM317 -1h1v3h-1zM318 -2h1v1h-1zM318 2h1v1h-1zM325 -1h1v3h-1zM326 -2h1v1h-1zM326 2h1v1h-1zM333 -1h1v3h-1zM334 -2h1v1h-1zM334 2h1v1h-1zM341 -1h1v3h-1zM342 -2h1v1h-1zM342 2h1v1h-1zM349 -1h1v3h-1zM350 -2h1v1h-1zM350 2h1v1h-1zM357 -1h1v3h-1zM358 -2h1v1h-1zM358 2h1v1h-1zM365 -1h1v3h-1zM366 -2h1v1h-1zM366 2h1v1h-1zM373 -1h1v3h-1zM374 -2h1v1h-1zM374 2h1v1h-1zM381 -1h1v3h-1zM382 -2h1v1h-1zM382 2h1v1h-1zM389 -1h1v3h-1zM390 -2h1v1h-1zM390 2h1v1h-1zM397 -1h1v3h-1zM398 -2h1v1h-1zM398 2h1v1h-1zM405 -1h1v3h-1zM406 -2h1v1h-1zM406 2h1v1h-1zM413 -1h1v3h-1zM414 -2h1v1h-1zM414 2h1v1h-1zM421 -1h1v3h-1zM422 -2h1v1h-1zM422 2h1v1h-1zM429 -1h1v3h-1zM430 -2h1v1h-1zM430 2h1v1h-1zM437 -1h1v3h-1zM438 -2h1v1h-1zM438 2h1v1h-1zM445 -1h1v3h-1zM446 -2h1v1h-1zM446 2h1v1h-1zM453 -1h1v3h-1zM454 -2h1v1h-1zM454 2h1v1h-1zM461 -1h1v3h-1zM462 -2h1v1h-1zM462 2h1v1h-1zM469 -1h1v3h-1zM470 -2h1v1h-1zM470 2h1v1h-1zM477 -1h1v3h-1zM478 -2h1v1h-1zM478 2h1v1h-1zM485 -1h1v3h-1zM486 -2h1v1h-1zM486 2h1v1h-1zM493 -1h1v3h-1zM494 -2h1v1h-1zM494 2h1v1h-1zM501 -1h1v3h-1zM502 -2h1v1h-1zM502 2h1v1h-1zM509 -1h1v3h-1zM510 -2h1v1h-1zM510 2h1v1h-1zM517 -1h1v3h-1zM518 -2h1v1h-1zM518 2h1v1h-1zM525 -1h1v3h-1zM526 -2h1v1h-1zM526 2h1v1h-1zM533 -1h1v3h-1zM534 -2h1v1h-1zM534 2h1v1h-1zM541 -1h1v3h-1zM542 -2h1v1h-1zM542 2h1v1h-1zM549 -1h1v3h-1zM550 -2h1v1h-1zM550 2h1v1h-1zM557 -1h1v3h-1zM558 -2h1v1h-1zM558 2h1v1h-1zM565 -1h1v3h-1zM566 -2h1v1h-1zM566 2h1v1h-1zM573 -1h1v3h-1zM574 -2h1v1h-1zM574 2h1v1h-1zM581 -1h1v3h-1zM582 -2h1v1h-1zM582 2h1v1h-1zM589 -1h1v3h-1zM590 -2h1v1h-1zM590 2h1v1h-1zM597 -1h1v3h-1zM598 -2h1v1h-1zM598 2h1v1h-1zM605 -1h1v3h-1zM606 -2h1v1h-1zM606 2h1v1h-1zM613 -1h1v3h-1zM614 -2h1v1h-1zM614 2h1v1h-1zM621 -1h1v3h-1zM622 -2h1v1h-1zM622 2h1v1h-1zM629 -1h1v3h-1zM630 -2h1v1h-1zM630 2h1v1h-1zM637 -1h1v3h-1zM638 -2h1v1h-1zM638 2h1v1h-1zM645 -1h1v3h-1zM646 -2h1v1h-1zM646 2h1v1h-1zM653 -1h1v3h-1zM654 -2h1v1h-1zM654 2h1v1h-1zM661 -1h1v3h-1zM662 -2h1v1h-1zM662 2h1v1h-1zM669 -1h1v3h-1zM670 -2h1v1h-1zM670 2h1v1h-1zM677 -1h1v3h-1zM678 -2h1v1h-1zM678 2h1v1h-1zM685 -1h1v3h-1zM686 -2h1v1h-1zM686 2h1v1h-1zM693 -1h1v3h-1zM694 -2h1v1h-1zM694 2h1v1h-1zM701 -1h1v3h-1zM702 -2h1v1h-1zM702 2h1v1h-1zM709 -1h1v3h-1zM710 -2h1v1h-1zM710 2h1v1h-1zM717 -1h1v3h-1zM718 -2h1v1h-1zM718 2h1v1h-1zM725 -1h1v3h-1zM726 -2h1v1h-1zM726 2h1v1h-1zM733 -1h1v3h-1zM734 -2h1v1h-1zM734 2h1v1h-1zM741 -1h1v3h-1zM742 -2h1v1h-1zM742 2h1v1h-1zM749 -1h1v3h-1zM750 -2h1v1h-1zM750 2h1v1h-1zM757 -1h1v3h-1zM758 -2h1v1h-1zM758 2h1v1h-1zM765 -1h1v3h-1zM766 -2h1v1h-1zM766 2h1v1h-1zM773 -1h1v3h-1zM774 -2h1v1h-1zM774 2h1v1h-1zM781 -1h1v3h-1zM782 -2h1v1h-1zM782 2h1v1h-1zM789 -1h1v3h-1zM790 -2h1v1h-1zM790 2h1v1h-1zM797 -1h1v3h-1zM798 -2h1v1h-1zM798 2h1v1h-1zM805 -1h1v3h-1zM806 -2h1v1h-1zM806 2h1v1h-1zM813 -1h1v3h-1zM814 -2h1v1h-1zM814 2h1v1h-1zM821 -1h1v3h-1zM822 -2h1v1h-1zM822 2h1v1h-1zM829 -1h1v3h-1zM830 -2h1v1h-1zM830 2h1v1h-1zM837 -1h1v3h-1zM838 -2h1v1h-1zM838 2h1v1h-1zM845 -1h1v3h-1zM846 -2h1v1h-1zM846 2h1v1h-1zM853 -1h1v3h-1zM854 -2h1v1h-1zM854 2h1v1h-1zM861 -1h1v3h-1zM862 -2h1v1h-1zM862 2h1v1h-1zM869 -1h1v3h-1zM870 -2h1v1h-1zM870 2h1v1h-1zM877 -1h1v3h-1zM878 -2h1v1h-1zM878 2h1v1h-1zM885 -1h1v3h-1zM886 -2h1v1h-1zM886 2h1v1h-1zM893 -1h1v3h-1zM894 -2h1v1h-1zM894 2h1v1h-1zM901 -1h1v3h-1zM902 -2h1v1h-1zM902 2h1v1h-1zM909 -1h1v3h-1zM910 -2h1v1h-1zM910 2h1v1h-1zM917 -1h1v3h-1zM918 -2h1v1h-1zM918 2h1v1h-1zM925 -1h1v3h-1zM926 -2h1v1h-1zM926 2h1v1h-1zM933 -1h1v3h-1zM934 -2h1v1h-1zM934 2h1v1h-1zM941 -1h1v3h-1zM942 -2h1v1h-1zM942 2h1v1h-1z"/><path d="M159 -3h1v1h-1zM159 3h1v1h-1zM167 -3h1v1h-1zM167 3h1v1h-1zM175 -3h1v1h-1zM175 3h1v1h-1zM183 -3h1v1h-1zM183 3h1v1h-1zM191 -3h1v1h-1zM191 3h1v1h-1zM199 -3h1v1h-1zM199 3h1v1h-1zM207 -3h1v1h-1zM207 3h1v1h-1zM215 -3h1v1h-1zM215 3h1v1h-1zM223 -3h1v1h-1zM223 3h1v1h-1zM231 -3h1v1h-1zM231 3h1v1h-1zM239 -3h1v1h-1zM239 3h1v1h-1zM247 -3h1v1h-1zM247 3h1v1h-1zM255 -3h1v1h-1zM255 3h1v1h-1zM263 -3h1v1h-1zM263 3h1v1h-1zM271 -3h1v1h-1zM271 3h1v1h-1zM279 -3h1v1h-1zM279 3h1v1h-1zM287 -3h1v1h-1zM287 3h1v1h-1zM295 -3h1v1h-1zM295 3h1v1h-1zM303 -3h1v1h-1zM303 3h1v1h-1zM311 -3h1v1h-1zM311 3h1v1h-1zM319 -3h1v1h-1zM319 3h1v1h-1zM327 -3h1v1h-1zM327 3h1v1h-1zM335 -3h1v1h-1zM335 3h1v1h-1zM343 -3h1v1h-1zM343 3h1v1h-1zM351 -3h1v1h-1zM351 3h1v1h-1zM359 -3h1v1h-1zM359 3h1v1h-1zM367 -3h1v1h-1zM367 3h1v1h-1zM375 -3h1v1h-1zM375 3h1v1h-1zM383 -3h1v1h-1zM383 3h1v1h-1zM391 -3h1v1h-1zM391 3h1v1h-1zM399 -3h1v1h-1zM399 3h1v1h-1zM407 -3h1v1h-1zM407 3h1v1h-1zM415 -3h1v1h-1zM415 3h1v1h-1zM423 -3h1v1h-1zM423 3h1v1h-1zM431 -3h1v1h-1zM431 3h1v1h-1zM439 -3h1v1h-1zM439 3h1v1h-1zM447 -3h1v1h-1zM447 3h1v1h-1zM455 -3h1v1h-1zM455 3h1v1h-1zM463 -3h1v1h-1zM463 3h1v1h-1zM471 -3h1v1h-1zM471 3h1v1h-1zM479 -3h1v1h-1zM479 3h1v1h-1zM487 -3h1v1h-1zM487 3h1v1h-1zM495 -3h1v1h-1zM495 3h1v1h-1zM503 -3h1v1h-1zM503 3h1v1h-1zM511 -3h1v1h-1zM511 3h1v1h-1zM519 -3h1v1h-1zM519 3h1v1h-1zM527 -3h1v1h-1zM527 3h1v1h-1zM535 -3h1v1h-1zM535 3h1v1h-1zM543 -3h1v1h-1zM543 3h1v1h-1zM551 -3h1v1h-1zM551 3h1v1h-1zM559 -3h1v1h-1zM559 3h1v1h-1zM567 -3h1v1h-1zM567 3h1v1h-1zM575 -3h1v1h-1zM575 3h1v1h-1zM583 -3h1v1h-1zM583 3h1v1h-1zM591 -3h1v1h-1zM591 3h1v1h-1zM599 -3h1v1h-1zM599 3h1v1h-1zM607 -3h1v1h-1zM607 3h1v1h-1zM615 -3h1v1h-1zM615 3h1v1h-1zM623 -3h1v1h-1zM623 3h1v1h-1zM631 -3h1v1h-1zM631 3h1v1h-1zM639 -3h1v1h-1zM639 3h1v1h-1zM647 -3h1v1h-1zM647 3h1v1h-1zM655 -3h1v1h-1zM655 3h1v1h-1zM663 -3h1v1h-1zM663 3h1v1h-1zM671 -3h1v1h-1zM671 3h1v1h-1zM679 -3h1v1h-1zM679 3h1v1h-1zM687 -3h1v1h-1zM687 3h1v1h-1zM695 -3h1v1h-1zM695 3h1v1h-1zM703 -3h1v1h-1zM703 3h1v1h-1zM711 -3h1v1h-1zM711 3h1v1h-1zM719 -3h1v1h-1zM719 3h1v1h-1zM727 -3h1v1h-1zM727 3h1v1h-1zM735 -3h1v1h-1zM735 3h1v1h-1zM743 -3h1v1h-1zM743 3h1v1h-1zM751 -3h1v1h-1zM751 3h1v1h-1zM759 -3h1v1h-1zM759 3h1v1h-1zM767 -3h1v1h-1zM767 3h1v1h-1zM775 -3h1v1h-1zM775 3h1v1h-1zM783 -3h1v1h-1zM783 3h1v1h-1zM791 -3h1v1h-1zM791 3h1v1h-1zM799 -3h1v1h-1zM799 3h1v1h-1zM807 -3h1v1h-1zM807 3h1v1h-1zM815 -3h1v1h-1zM815 3h1v1h-1zM823 -3h1v1h-1zM823 3h1v1h-1zM831 -3h1v1h-1zM831 3h1v1h-1zM839 -3h1v1h-1zM839 3h1v1h-1zM847 -3h1v1h-1zM847 3h1v1h-1zM855 -3h1v1h-1zM855 3h1v1h-1zM863 -3h1v1h-1zM863 3h1v1h-1zM871 -3h1v1h-1zM871 3h1v1h-1zM879 -3h1v1h-1zM879 3h1v1h-1zM887 -3h1v1h-1zM887 3h1v1h-1zM895 -3h1v1h-1zM895 3h1v1h-1zM903 -3h1v1h-1zM903 3h1v1h-1zM911 -3h1v1h-1zM911 3h1v1h-1zM919 -3h1v1h-1zM919 3h1v1h-1zM927 -3h1v1h-1zM927 3h1v1h-1zM935 -3h1v1h-1zM935 3h1v1h-1zM943 -3h1v1h-1zM943 3h1v1h-1z" fill-opacity="0.6"/></g>
<text x="145" y="156" fill="#1a76b4" font-size="13">4</text>
<text transform="matrix(1 0 0 1.08 0 -12.480)" x="110 118 127 136" y="156" fill="#1a76b4" font-size="13">THAP</text>
<rect x="156" y="151" width="793" height="1" fill="#1a76b4"/>
<g transform="translate(0 151)" fill="#1a76b4"><path d="M157 -1h1v3h-1zM158 -2h1v1h-1zM158 2h1v1h-1zM165 -1h1v3h-1zM166 -2h1v1h-1zM166 2h1v1h-1zM173 -1h1v3h-1zM174 -2h1v1h-1zM174 2h1v1h-1zM181 -1h1v3h-1zM182 -2h1v1h-1zM182 2h1v1h-1zM189 -1h1v3h-1zM190 -2h1v1h-1zM190 2h1v1h-1zM197 -1h1v3h-1zM198 -2h1v1h-1zM198 2h1v1h-1zM205 -1h1v3h-1zM206 -2h1v1h-1zM206 2h1v1h-1zM213 -1h1v3h-1zM214 -2h1v1h-1zM214 2h1v1h-1zM221 -1h1v3h-1zM222 -2h1v1h-1zM222 2h1v1h-1zM229 -1h1v3h-1zM230 -2h1v1h-1zM230 2h1v1h-1zM237 -1h1v3h-1zM238 -2h1v1h-1zM238 2h1v1h-1zM245 -1h1v3h-1zM246 -2h1v1h-1zM246 2h1v1h-1zM253 -1h1v3h-1zM254 -2h1v1h-1zM254 2h1v1h-1zM261 -1h1v3h-1zM262 -2h1v1h-1zM262 2h1v1h-1zM269 -1h1v3h-1zM270 -2h1v1h-1zM270 2h1v1h-1zM277 -1h1v3h-1zM278 -2h1v1h-1zM278 2h1v1h-1zM285 -1h1v3h-1zM286 -2h1v1h-1zM286 2h1v1h-1zM293 -1h1v3h-1zM294 -2h1v1h-1zM294 2h1v1h-1zM301 -1h1v3h-1zM302 -2h1v1h-1zM302 2h1v1h-1zM309 -1h1v3h-1zM310 -2h1v1h-1zM310 2h1v1h-1zM317 -1h1v3h-1zM318 -2h1v1h-1zM318 2h1v1h-1zM325 -1h1v3h-1zM326 -2h1v1h-1zM326 2h1v1h-1zM333 -1h1v3h-1zM334 -2h1v1h-1zM334 2h1v1h-1zM341 -1h1v3h-1zM342 -2h1v1h-1zM342 2h1v1h-1zM349 -1h1v3h-1zM350 -2h1v1h-1zM350 2h1v1h-1zM357 -1h1v3h-1zM358 -2h1v1h-1zM358 2h1v1h-1zM365 -1h1v3h-1zM366 -2h1v1h-1zM366 2h1v1h-1zM373 -1h1v3h-1zM374 -2h1v1h-1zM374 2h1v1h-1zM381 -1h1v3h-1zM382 -2h1v1h-1zM382 2h1v1h-1zM389 -1h1v3h-1zM390 -2h1v1h-1zM390 2h1v1h-1zM397 -1h1v3h-1zM398 -2h1v1h-1zM398 2h1v1h-1zM405 -1h1v3h-1zM406 -2h1v1h-1zM406 2h1v1h-1zM413 -1h1v3h-1zM414 -2h1v1h-1zM414 2h1v1h-1zM421 -1h1v3h-1zM422 -2h1v1h-1zM422 2h1v1h-1zM429 -1h1v3h-1zM430 -2h1v1h-1zM430 2h1v1h-1zM437 -1h1v3h-1zM438 -2h1v1h-1zM438 2h1v1h-1zM445 -1h1v3h-1zM446 -2h1v1h-1zM446 2h1v1h-1zM453 -1h1v3h-1zM454 -2h1v1h-1zM454 2h1v1h-1zM461 -1h1v3h-1zM462 -2h1v1h-1zM462 2h1v1h-1zM469 -1h1v3h-1zM470 -2h1v1h-1zM470 2h1v1h-1zM477 -1h1v3h-1zM478 -2h1v1h-1zM478 2h1v1h-1zM485 -1h1v3h-1zM486 -2h1v1h-1zM486 2h1v1h-1zM493 -1h1v3h-1zM494 -2h1v1h-1zM494 2h1v1h-1zM501 -1h1v3h-1zM502 -2h1v1h-1zM502 2h1v1h-1zM509 -1h1v3h-1zM510 -2h1v1h-1zM510 2h1v1h-1zM517 -1h1v3h-1zM518 -2h1v1h-1zM518 2h1v1h-1zM525 -1h1v3h-1zM526 -2h1v1h-1zM526 2h1v1h-1zM533 -1h1v3h-1zM534 -2h1v1h-1zM534 2h1v1h-1zM541 -1h1v3h-1zM542 -2h1v1h-1zM542 2h1v1h-1zM549 -1h1v3h-1zM550 -2h1v1h-1zM550 2h1v1h-1zM557 -1h1v3h-1zM558 -2h1v1h-1zM558 2h1v1h-1zM565 -1h1v3h-1zM566 -2h1v1h-1zM566 2h1v1h-1zM573 -1h1v3h-1zM574 -2h1v1h-1zM574 2h1v1h-1zM581 -1h1v3h-1zM582 -2h1v1h-1zM582 2h1v1h-1zM589 -1h1v3h-1zM590 -2h1v1h-1zM590 2h1v1h-1zM597 -1h1v3h-1zM598 -2h1v1h-1zM598 2h1v1h-1zM605 -1h1v3h-1zM606 -2h1v1h-1zM606 2h1v1h-1zM613 -1h1v3h-1zM614 -2h1v1h-1zM614 2h1v1h-1zM621 -1h1v3h-1zM622 -2h1v1h-1zM622 2h1v1h-1zM629 -1h1v3h-1zM630 -2h1v1h-1zM630 2h1v1h-1zM637 -1h1v3h-1zM638 -2h1v1h-1zM638 2h1v1h-1zM645 -1h1v3h-1zM646 -2h1v1h-1zM646 2h1v1h-1zM653 -1h1v3h-1zM654 -2h1v1h-1zM654 2h1v1h-1zM661 -1h1v3h-1zM662 -2h1v1h-1zM662 2h1v1h-1zM669 -1h1v3h-1zM670 -2h1v1h-1zM670 2h1v1h-1zM677 -1h1v3h-1zM678 -2h1v1h-1zM678 2h1v1h-1zM685 -1h1v3h-1zM686 -2h1v1h-1zM686 2h1v1h-1zM693 -1h1v3h-1zM694 -2h1v1h-1zM694 2h1v1h-1zM701 -1h1v3h-1zM702 -2h1v1h-1zM702 2h1v1h-1zM709 -1h1v3h-1zM710 -2h1v1h-1zM710 2h1v1h-1zM717 -1h1v3h-1zM718 -2h1v1h-1zM718 2h1v1h-1zM725 -1h1v3h-1zM726 -2h1v1h-1zM726 2h1v1h-1zM733 -1h1v3h-1zM734 -2h1v1h-1zM734 2h1v1h-1zM741 -1h1v3h-1zM742 -2h1v1h-1zM742 2h1v1h-1zM749 -1h1v3h-1zM750 -2h1v1h-1zM750 2h1v1h-1zM757 -1h1v3h-1zM758 -2h1v1h-1zM758 2h1v1h-1zM765 -1h1v3h-1zM766 -2h1v1h-1zM766 2h1v1h-1zM773 -1h1v3h-1zM774 -2h1v1h-1zM774 2h1v1h-1zM781 -1h1v3h-1zM782 -2h1v1h-1zM782 2h1v1h-1zM789 -1h1v3h-1zM790 -2h1v1h-1zM790 2h1v1h-1zM797 -1h1v3h-1zM798 -2h1v1h-1zM798 2h1v1h-1zM805 -1h1v3h-1zM806 -2h1v1h-1zM806 2h1v1h-1zM813 -1h1v3h-1zM814 -2h1v1h-1zM814 2h1v1h-1zM821 -1h1v3h-1zM822 -2h1v1h-1zM822 2h1v1h-1zM829 -1h1v3h-1zM830 -2h1v1h-1zM830 2h1v1h-1zM837 -1h1v3h-1zM838 -2h1v1h-1zM838 2h1v1h-1zM845 -1h1v3h-1zM846 -2h1v1h-1zM846 2h1v1h-1zM853 -1h1v3h-1zM854 -2h1v1h-1zM854 2h1v1h-1zM861 -1h1v3h-1zM862 -2h1v1h-1zM862 2h1v1h-1zM869 -1h1v3h-1zM870 -2h1v1h-1zM870 2h1v1h-1zM877 -1h1v3h-1zM878 -2h1v1h-1zM878 2h1v1h-1zM885 -1h1v3h-1zM886 -2h1v1h-1zM886 2h1v1h-1zM893 -1h1v3h-1zM894 -2h1v1h-1zM894 2h1v1h-1zM901 -1h1v3h-1zM902 -2h1v1h-1zM902 2h1v1h-1zM909 -1h1v3h-1zM910 -2h1v1h-1zM910 2h1v1h-1zM917 -1h1v3h-1zM918 -2h1v1h-1zM918 2h1v1h-1zM925 -1h1v3h-1zM926 -2h1v1h-1zM926 2h1v1h-1zM933 -1h1v3h-1zM934 -2h1v1h-1zM934 2h1v1h-1zM941 -1h1v3h-1zM942 -2h1v1h-1zM942 2h1v1h-1z"/><path d="M159 -3h1v1h-1zM159 3h1v1h-1zM167 -3h1v1h-1zM167 3h1v1h-1zM175 -3h1v1h-1zM175 3h1v1h-1zM183 -3h1v1h-1zM183 3h1v1h-1zM191 -3h1v1h-1zM191 3h1v1h-1zM199 -3h1v1h-1zM199 3h1v1h-1zM207 -3h1v1h-1zM207 3h1v1h-1zM215 -3h1v1h-1zM215 3h1v1h-1zM223 -3h1v1h-1zM223 3h1v1h-1zM231 -3h1v1h-1zM231 3h1v1h-1zM239 -3h1v1h-1zM239 3h1v1h-1zM247 -3h1v1h-1zM247 3h1v1h-1zM255 -3h1v1h-1zM255 3h1v1h-1zM263 -3h1v1h-1zM263 3h1v1h-1zM271 -3h1v1h-1zM271 3h1v1h-1zM279 -3h1v1h-1zM279 3h1v1h-1zM287 -3h1v1h-1zM287 3h1v1h-1zM295 -3h1v1h-1zM295 3h1v1h-1zM303 -3h1v1h-1zM303 3h1v1h-1zM311 -3h1v1h-1zM311 3h1v1h-1zM319 -3h1v1h-1zM319 3h1v1h-1zM327 -3h1v1h-1zM327 3h1v1h-1zM335 -3h1v1h-1zM335 3h1v1h-1zM343 -3h1v1h-1zM343 3h1v1h-1zM351 -3h1v1h-1zM351 3h1v1h-1zM359 -3h1v1h-1zM359 3h1v1h-1zM367 -3h1v1h-1zM367 3h1v1h-1zM375 -3h1v1h-1zM375 3h1v1h-1zM383 -3h1v1h-1zM383 3h1v1h-1zM391 -3h1v1h-1zM391 3h1v1h-1zM399 -3h1v1h-1zM399 3h1v1h-1zM407 -3h1v1h-1zM407 3h1v1h-1zM415 -3h1v1h-1zM415 3h1v1h-1zM423 -3h1v1h-1zM423 3h1v1h-1zM431 -3h1v1h-1zM431 3h1v1h-1zM439 -3h1v1h-1zM439 3h1v1h-1zM447 -3h1v1h-1zM447 3h1v1h-1zM455 -3h1v1h-1zM455 3h1v1h-1zM463 -3h1v1h-1zM463 3h1v1h-1zM471 -3h1v1h-1zM471 3h1v1h-1zM479 -3h1v1h-1zM479 3h1v1h-1zM487 -3h1v1h-1zM487 3h1v1h-1zM495 -3h1v1h-1zM495 3h1v1h-1zM503 -3h1v1h-1zM503 3h1v1h-1zM511 -3h1v1h-1zM511 3h1v1h-1zM519 -3h1v1h-1zM519 3h1v1h-1zM527 -3h1v1h-1zM527 3h1v1h-1zM535 -3h1v1h-1zM535 3h1v1h-1zM543 -3h1v1h-1zM543 3h1v1h-1zM551 -3h1v1h-1zM551 3h1v1h-1zM559 -3h1v1h-1zM559 3h1v1h-1zM567 -3h1v1h-1zM567 3h1v1h-1zM575 -3h1v1h-1zM575 3h1v1h-1zM583 -3h1v1h-1zM583 3h1v1h-1zM591 -3h1v1h-1zM591 3h1v1h-1zM599 -3h1v1h-1zM599 3h1v1h-1zM607 -3h1v1h-1zM607 3h1v1h-1zM615 -3h1v1h-1zM615 3h1v1h-1zM623 -3h1v1h-1zM623 3h1v1h-1zM631 -3h1v1h-1zM631 3h1v1h-1zM639 -3h1v1h-1zM639 3h1v1h-1zM647 -3h1v1h-1zM647 3h1v1h-1zM655 -3h1v1h-1zM655 3h1v1h-1zM663 -3h1v1h-1zM663 3h1v1h-1zM671 -3h1v1h-1zM671 3h1v1h-1zM679 -3h1v1h-1zM679 3h1v1h-1zM687 -3h1v1h-1zM687 3h1v1h-1zM695 -3h1v1h-1zM695 3h1v1h-1zM703 -3h1v1h-1zM703 3h1v1h-1zM711 -3h1v1h-1zM711 3h1v1h-1zM719 -3h1v1h-1zM719 3h1v1h-1zM727 -3h1v1h-1zM727 3h1v1h-1zM735 -3h1v1h-1zM735 3h1v1h-1zM743 -3h1v1h-1zM743 3h1v1h-1zM751 -3h1v1h-1zM751 3h1v1h-1zM759 -3h1v1h-1zM759 3h1v1h-1zM767 -3h1v1h-1zM767 3h1v1h-1zM775 -3h1v1h-1zM775 3h1v1h-1zM783 -3h1v1h-1zM783 3h1v1h-1zM791 -3h1v1h-1zM791 3h1v1h-1zM799 -3h1v1h-1zM799 3h1v1h-1zM807 -3h1v1h-1zM807 3h1v1h-1zM815 -3h1v1h-1zM815 3h1v1h-1zM823 -3h1v1h-1zM823 3h1v1h-1zM831 -3h1v1h-1zM831 3h1v1h-1zM839 -3h1v1h-1zM839 3h1v1h-1zM847 -3h1v1h-1zM847 3h1v1h-1zM855 -3h1v1h-1zM855 3h1v1h-1zM863 -3h1v1h-1zM863 3h1v1h-1zM871 -3h1v1h-1zM871 3h1v1h-1zM879 -3h1v1h-1zM879 3h1v1h-1zM887 -3h1v1h-1zM887 3h1v1h-1zM895 -3h1v1h-1zM895 3h1v1h-1zM903 -3h1v1h-1zM903 3h1v1h-1zM911 -3h1v1h-1zM911 3h1v1h-1zM919 -3h1v1h-1zM919 3h1v1h-1zM927 -3h1v1h-1zM927 3h1v1h-1zM935 -3h1v1h-1zM935 3h1v1h-1zM943 -3h1v1h-1zM943 3h1v1h-1z" fill-opacity="0.6"/></g>
<text x="145" y="172" fill="#0c0c78" font-size="13">4</text>
<text transform="matrix(1 0 0 1.08 0 -13.760)" x="110 118 127 136" y="172" fill="#0c0c78" font-size="13">THAP</text>
<rect x="156" y="167" width="793" height="1" fill="#0c0c78"/>
<g transform="translate(0 167)" fill="#0c0c78"><path d="M157 -1h1v3h-1zM158 -2h1v1h-1zM158 2h1v1h-1zM165 -1h1v3h-1zM166 -2h1v1h-1zM166 2h1v1h-1zM173 -1h1v3h-1zM174 -2h1v1h-1zM174 2h1v1h-1zM181 -1h1v3h-1zM182 -2h1v1h-1zM182 2h1v1h-1zM189 -1h1v3h-1zM190 -2h1v1h-1zM190 2h1v1h-1zM197 -1h1v3h-1zM198 -2h1v1h-1zM198 2h1v1h-1zM205 -1h1v3h-1zM206 -2h1v1h-1zM206 2h1v1h-1zM213 -1h1v3h-1zM214 -2h1v1h-1zM214 2h1v1h-1zM221 -1h1v3h-1zM222 -2h1v1h-1zM222 2h1v1h-1zM229 -1h1v3h-1zM230 -2h1v1h-1zM230 2h1v1h-1zM237 -1h1v3h-1zM238 -2h1v1h-1zM238 2h1v1h-1zM245 -1h1v3h-1zM246 -2h1v1h-1zM246 2h1v1h-1zM253 -1h1v3h-1zM254 -2h1v1h-1zM254 2h1v1h-1zM261 -1h1v3h-1zM262 -2h1v1h-1zM262 2h1v1h-1zM269 -1h1v3h-1zM270 -2h1v1h-1zM270 2h1v1h-1zM277 -1h1v3h-1zM278 -2h1v1h-1zM278 2h1v1h-1zM285 -1h1v3h-1zM286 -2h1v1h-1zM286 2h1v1h-1zM293 -1h1v3h-1zM294 -2h1v1h-1zM294 2h1v1h-1zM301 -1h1v3h-1zM302 -2h1v1h-1zM302 2h1v1h-1zM309 -1h1v3h-1zM310 -2h1v1h-1zM310 2h1v1h-1zM317 -1h1v3h-1zM318 -2h1v1h-1zM318 2h1v1h-1zM325 -1h1v3h-1zM326 -2h1v1h-1zM326 2h1v1h-1zM333 -1h1v3h-1zM334 -2h1v1h-1zM334 2h1v1h-1zM341 -1h1v3h-1zM342 -2h1v1h-1zM342 2h1v1h-1zM349 -1h1v3h-1zM350 -2h1v1h-1zM350 2h1v1h-1zM357 -1h1v3h-1zM358 -2h1v1h-1zM358 2h1v1h-1zM365 -1h1v3h-1zM366 -2h1v1h-1zM366 2h1v1h-1zM373 -1h1v3h-1zM374 -2h1v1h-1zM374 2h1v1h-1zM381 -1h1v3h-1zM382 -2h1v1h-1zM382 2h1v1h-1zM389 -1h1v3h-1zM390 -2h1v1h-1zM390 2h1v1h-1zM397 -1h1v3h-1zM398 -2h1v1h-1zM398 2h1v1h-1zM405 -1h1v3h-1zM406 -2h1v1h-1zM406 2h1v1h-1zM413 -1h1v3h-1zM414 -2h1v1h-1zM414 2h1v1h-1zM421 -1h1v3h-1zM422 -2h1v1h-1zM422 2h1v1h-1zM429 -1h1v3h-1zM430 -2h1v1h-1zM430 2h1v1h-1zM437 -1h1v3h-1zM438 -2h1v1h-1zM438 2h1v1h-1zM445 -1h1v3h-1zM446 -2h1v1h-1zM446 2h1v1h-1zM453 -1h1v3h-1zM454 -2h1v1h-1zM454 2h1v1h-1zM461 -1h1v3h-1zM462 -2h1v1h-1zM462 2h1v1h-1zM469 -1h1v3h-1zM470 -2h1v1h-1zM470 2h1v1h-1zM477 -1h1v3h-1zM478 -2h1v1h-1zM478 2h1v1h-1zM485 -1h1v3h-1zM486 -2h1v1h-1zM486 2h1v1h-1zM493 -1h1v3h-1zM494 -2h1v1h-1zM494 2h1v1h-1zM501 -1h1v3h-1zM502 -2h1v1h-1zM502 2h1v1h-1zM509 -1h1v3h-1zM510 -2h1v1h-1zM510 2h1v1h-1zM517 -1h1v3h-1zM518 -2h1v1h-1zM518 2h1v1h-1zM525 -1h1v3h-1zM526 -2h1v1h-1zM526 2h1v1h-1zM533 -1h1v3h-1zM534 -2h1v1h-1zM534 2h1v1h-1zM541 -1h1v3h-1zM542 -2h1v1h-1zM542 2h1v1h-1zM549 -1h1v3h-1zM550 -2h1v1h-1zM550 2h1v1h-1zM557 -1h1v3h-1zM558 -2h1v1h-1zM558 2h1v1h-1zM565 -1h1v3h-1zM566 -2h1v1h-1zM566 2h1v1h-1zM573 -1h1v3h-1zM574 -2h1v1h-1zM574 2h1v1h-1zM581 -1h1v3h-1zM582 -2h1v1h-1zM582 2h1v1h-1zM589 -1h1v3h-1zM590 -2h1v1h-1zM590 2h1v1h-1zM597 -1h1v3h-1zM598 -2h1v1h-1zM598 2h1v1h-1zM605 -1h1v3h-1zM606 -2h1v1h-1zM606 2h1v1h-1zM613 -1h1v3h-1zM614 -2h1v1h-1zM614 2h1v1h-1zM621 -1h1v3h-1zM622 -2h1v1h-1zM622 2h1v1h-1zM629 -1h1v3h-1zM630 -2h1v1h-1zM630 2h1v1h-1zM637 -1h1v3h-1zM638 -2h1v1h-1zM638 2h1v1h-1zM645 -1h1v3h-1zM646 -2h1v1h-1zM646 2h1v1h-1zM653 -1h1v3h-1zM654 -2h1v1h-1zM654 2h1v1h-1zM661 -1h1v3h-1zM662 -2h1v1h-1zM662 2h1v1h-1zM669 -1h1v3h-1zM670 -2h1v1h-1zM670 2h1v1h-1zM677 -1h1v3h-1zM678 -2h1v1h-1zM678 2h1v1h-1zM685 -1h1v3h-1zM686 -2h1v1h-1zM686 2h1v1h-1zM693 -1h1v3h-1zM694 -2h1v1h-1zM694 2h1v1h-1zM701 -1h1v3h-1zM702 -2h1v1h-1zM702 2h1v1h-1zM709 -1h1v3h-1zM710 -2h1v1h-1zM710 2h1v1h-1zM717 -1h1v3h-1zM718 -2h1v1h-1zM718 2h1v1h-1zM725 -1h1v3h-1zM726 -2h1v1h-1zM726 2h1v1h-1zM733 -1h1v3h-1zM734 -2h1v1h-1zM734 2h1v1h-1zM741 -1h1v3h-1zM742 -2h1v1h-1zM742 2h1v1h-1zM749 -1h1v3h-1zM750 -2h1v1h-1zM750 2h1v1h-1zM757 -1h1v3h-1zM758 -2h1v1h-1zM758 2h1v1h-1zM765 -1h1v3h-1zM766 -2h1v1h-1zM766 2h1v1h-1zM773 -1h1v3h-1zM774 -2h1v1h-1zM774 2h1v1h-1zM781 -1h1v3h-1zM782 -2h1v1h-1zM782 2h1v1h-1zM789 -1h1v3h-1zM790 -2h1v1h-1zM790 2h1v1h-1zM797 -1h1v3h-1zM798 -2h1v1h-1zM798 2h1v1h-1zM805 -1h1v3h-1zM806 -2h1v1h-1zM806 2h1v1h-1zM813 -1h1v3h-1zM814 -2h1v1h-1zM814 2h1v1h-1zM821 -1h1v3h-1zM822 -2h1v1h-1zM822 2h1v1h-1zM829 -1h1v3h-1zM830 -2h1v1h-1zM830 2h1v1h-1zM837 -1h1v3h-1zM838 -2h1v1h-1zM838 2h1v1h-1zM845 -1h1v3h-1zM846 -2h1v1h-1zM846 2h1v1h-1zM853 -1h1v3h-1zM854 -2h1v1h-1zM854 2h1v1h-1zM861 -1h1v3h-1zM862 -2h1v1h-1zM862 2h1v1h-1zM869 -1h1v3h-1zM870 -2h1v1h-1zM870 2h1v1h-1zM877 -1h1v3h-1zM878 -2h1v1h-1zM878 2h1v1h-1zM885 -1h1v3h-1zM886 -2h1v1h-1zM886 2h1v1h-1zM893 -1h1v3h-1zM894 -2h1v1h-1zM894 2h1v1h-1zM901 -1h1v3h-1zM902 -2h1v1h-1zM902 2h1v1h-1zM909 -1h1v3h-1zM910 -2h1v1h-1zM910 2h1v1h-1zM917 -1h1v3h-1zM918 -2h1v1h-1zM918 2h1v1h-1zM925 -1h1v3h-1zM926 -2h1v1h-1zM926 2h1v1h-1zM933 -1h1v3h-1zM934 -2h1v1h-1zM934 2h1v1h-1zM941 -1h1v3h-1zM942 -2h1v1h-1zM942 2h1v1h-1z"/><path d="M159 -3h1v1h-1zM159 3h1v1h-1zM167 -3h1v1h-1zM167 3h1v1h-1zM175 -3h1v1h-1zM175 3h1v1h-1zM183 -3h1v1h-1zM183 3h1v1h-1zM191 -3h1v1h-1zM191 3h1v1h-1zM199 -3h1v1h-1zM199 3h1v1h-1zM207 -3h1v1h-1zM207 3h1v1h-1zM215 -3h1v1h-1zM215 3h1v1h-1zM223 -3h1v1h-1zM223 3h1v1h-1zM231 -3h1v1h-1zM231 3h1v1h-1zM239 -3h1v1h-1zM239 3h1v1h-1zM247 -3h1v1h-1zM247 3h1v1h-1zM255 -3h1v1h-1zM255 3h1v1h-1zM263 -3h1v1h-1zM263 3h1v1h-1zM271 -3h1v1h-1zM271 3h1v1h-1zM279 -3h1v1h-1zM279 3h1v1h-1zM287 -3h1v1h-1zM287 3h1v1h-1zM295 -3h1v1h-1zM295 3h1v1h-1zM303 -3h1v1h-1zM303 3h1v1h-1zM311 -3h1v1h-1zM311 3h1v1h-1zM319 -3h1v1h-1zM319 3h1v1h-1zM327 -3h1v1h-1zM327 3h1v1h-1zM335 -3h1v1h-1zM335 3h1v1h-1zM343 -3h1v1h-1zM343 3h1v1h-1zM351 -3h1v1h-1zM351 3h1v1h-1zM359 -3h1v1h-1zM359 3h1v1h-1zM367 -3h1v1h-1zM367 3h1v1h-1zM375 -3h1v1h-1zM375 3h1v1h-1zM383 -3h1v1h-1zM383 3h1v1h-1zM391 -3h1v1h-1zM391 3h1v1h-1zM399 -3h1v1h-1zM399 3h1v1h-1zM407 -3h1v1h-1zM407 3h1v1h-1zM415 -3h1v1h-1zM415 3h1v1h-1zM423 -3h1v1h-1zM423 3h1v1h-1zM431 -3h1v1h-1zM431 3h1v1h-1zM439 -3h1v1h-1zM439 3h1v1h-1zM447 -3h1v1h-1zM447 3h1v1h-1zM455 -3h1v1h-1zM455 3h1v1h-1zM463 -3h1v1h-1zM463 3h1v1h-1zM471 -3h1v1h-1zM471 3h1v1h-1zM479 -3h1v1h-1zM479 3h1v1h-1zM487 -3h1v1h-1zM487 3h1v1h-1zM495 -3h1v1h-1zM495 3h1v1h-1zM503 -3h1v1h-1zM503 3h1v1h-1zM511 -3h1v1h-1zM511 3h1v1h-1zM519 -3h1v1h-1zM519 3h1v1h-1zM527 -3h1v1h-1zM527 3h1v1h-1zM535 -3h1v1h-1zM535 3h1v1h-1zM543 -3h1v1h-1zM543 3h1v1h-1zM551 -3h1v1h-1zM551 3h1v1h-1zM559 -3h1v1h-1zM559 3h1v1h-1zM567 -3h1v1h-1zM567 3h1v1h-1zM575 -3h1v1h-1zM575 3h1v1h-1zM583 -3h1v1h-1zM583 3h1v1h-1zM591 -3h1v1h-1zM591 3h1v1h-1zM599 -3h1v1h-1zM599 3h1v1h-1zM607 -3h1v1h-1zM607 3h1v1h-1zM615 -3h1v1h-1zM615 3h1v1h-1zM623 -3h1v1h-1zM623 3h1v1h-1zM631 -3h1v1h-1zM631 3h1v1h-1zM639 -3h1v1h-1zM639 3h1v1h-1zM647 -3h1v1h-1zM647 3h1v1h-1zM655 -3h1v1h-1zM655 3h1v1h-1zM663 -3h1v1h-1zM663 3h1v1h-1zM671 -3h1v1h-1zM671 3h1v1h-1zM679 -3h1v1h-1zM679 3h1v1h-1zM687 -3h1v1h-1zM687 3h1v1h-1zM695 -3h1v1h-1zM695 3h1v1h-1zM703 -3h1v1h-1zM703 3h1v1h-1zM711 -3h1v1h-1zM711 3h1v1h-1zM719 -3h1v1h-1zM719 3h1v1h-1zM727 -3h1v1h-1zM727 3h1v1h-1zM735 -3h1v1h-1zM735 3h1v1h-1zM743 -3h1v1h-1zM743 3h1v1h-1zM751 -3h1v1h-1zM751 3h1v1h-1zM759 -3h1v1h-1zM759 3h1v1h-1zM767 -3h1v1h-1zM767 3h1v1h-1zM775 -3h1v1h-1zM775 3h1v1h-1zM783 -3h1v1h-1zM783 3h1v1h-1zM791 -3h1v1h-1zM791 3h1v1h-1zM799 -3h1v1h-1zM799 3h1v1h-1zM807 -3h1v1h-1zM807 3h1v1h-1zM815 -3h1v1h-1zM815 3h1v1h-1zM823 -3h1v1h-1zM823 3h1v1h-1zM831 -3h1v1h-1zM831 3h1v1h-1zM839 -3h1v1h-1zM839 3h1v1h-1zM847 -3h1v1h-1zM847 3h1v1h-1zM855 -3h1v1h-1zM855 3h1v1h-1zM863 -3h1v1h-1zM863 3h1v1h-1zM871 -3h1v1h-1zM871 3h1v1h-1zM879 -3h1v1h-1zM879 3h1v1h-1zM887 -3h1v1h-1zM887 3h1v1h-1zM895 -3h1v1h-1zM895 3h1v1h-1zM903 -3h1v1h-1zM903 3h1v1h-1zM911 -3h1v1h-1zM911 3h1v1h-1zM919 -3h1v1h-1zM919 3h1v1h-1zM927 -3h1v1h-1zM927 3h1v1h-1zM935 -3h1v1h-1zM935 3h1v1h-1zM943 -3h1v1h-1zM943 3h1v1h-1z" fill-opacity="0.6"/></g>
<text x="145" y="188" fill="#0c0c78" font-size="13">4</text>
<text transform="matrix(1 0 0 1.08 0 -15.040)" x="110 118 127 136" y="188" fill="#0c0c78" font-size="13">THAP</text>
<rect x="156" y="183" width="793" height="1" fill="#0c0c78"/>
<g transform="translate(0 183)" fill="#0c0c78"><path d="M157 -1h1v3h-1zM158 -2h1v1h-1zM158 2h1v1h-1zM165 -1h1v3h-1zM166 -2h1v1h-1zM166 2h1v1h-1zM173 -1h1v3h-1zM174 -2h1v1h-1zM174 2h1v1h-1zM181 -1h1v3h-1zM182 -2h1v1h-1zM182 2h1v1h-1zM189 -1h1v3h-1zM190 -2h1v1h-1zM190 2h1v1h-1zM197 -1h1v3h-1zM198 -2h1v1h-1zM198 2h1v1h-1zM205 -1h1v3h-1zM206 -2h1v1h-1zM206 2h1v1h-1zM213 -1h1v3h-1zM214 -2h1v1h-1zM214 2h1v1h-1zM221 -1h1v3h-1zM222 -2h1v1h-1zM222 2h1v1h-1zM229 -1h1v3h-1zM230 -2h1v1h-1zM230 2h1v1h-1zM237 -1h1v3h-1zM238 -2h1v1h-1zM238 2h1v1h-1zM245 -1h1v3h-1zM246 -2h1v1h-1zM246 2h1v1h-1zM253 -1h1v3h-1zM254 -2h1v1h-1zM254 2h1v1h-1zM261 -1h1v3h-1zM262 -2h1v1h-1zM262 2h1v1h-1zM269 -1h1v3h-1zM270 -2h1v1h-1zM270 2h1v1h-1zM277 -1h1v3h-1zM278 -2h1v1h-1zM278 2h1v1h-1zM285 -1h1v3h-1zM286 -2h1v1h-1zM286 2h1v1h-1zM293 -1h1v3h-1zM294 -2h1v1h-1zM294 2h1v1h-1zM301 -1h1v3h-1zM302 -2h1v1h-1zM302 2h1v1h-1zM309 -1h1v3h-1zM310 -2h1v1h-1zM310 2h1v1h-1zM317 -1h1v3h-1zM318 -2h1v1h-1zM318 2h1v1h-1zM325 -1h1v3h-1zM326 -2h1v1h-1zM326 2h1v1h-1zM333 -1h1v3h-1zM334 -2h1v1h-1zM334 2h1v1h-1zM341 -1h1v3h-1zM342 -2h1v1h-1zM342 2h1v1h-1zM349 -1h1v3h-1zM350 -2h1v1h-1zM350 2h1v1h-1zM357 -1h1v3h-1zM358 -2h1v1h-1zM358 2h1v1h-1zM365 -1h1v3h-1zM366 -2h1v1h-1zM366 2h1v1h-1zM373 -1h1v3h-1zM374 -2h1v1h-1zM374 2h1v1h-1zM381 -1h1v3h-1zM382 -2h1v1h-1zM382 2h1v1h-1zM389 -1h1v3h-1zM390 -2h1v1h-1zM390 2h1v1h-1zM397 -1h1v3h-1zM398 -2h1v1h-1zM398 2h1v1h-1zM405 -1h1v3h-1zM406 -2h1v1h-1zM406 2h1v1h-1zM413 -1h1v3h-1zM414 -2h1v1h-1zM414 2h1v1h-1zM421 -1h1v3h-1zM422 -2h1v1h-1zM422 2h1v1h-1zM429 -1h1v3h-1zM430 -2h1v1h-1zM430 2h1v1h-1zM437 -1h1v3h-1zM438 -2h1v1h-1zM438 2h1v1h-1zM445 -1h1v3h-1zM446 -2h1v1h-1zM446 2h1v1h-1zM453 -1h1v3h-1zM454 -2h1v1h-1zM454 2h1v1h-1zM461 -1h1v3h-1zM462 -2h1v1h-1zM462 2h1v1h-1zM469 -1h1v3h-1zM470 -2h1v1h-1zM470 2h1v1h-1zM477 -1h1v3h-1zM478 -2h1v1h-1zM478 2h1v1h-1zM485 -1h1v3h-1zM486 -2h1v1h-1zM486 2h1v1h-1zM493 -1h1v3h-1zM494 -2h1v1h-1zM494 2h1v1h-1zM501 -1h1v3h-1zM502 -2h1v1h-1zM502 2h1v1h-1zM509 -1h1v3h-1zM510 -2h1v1h-1zM510 2h1v1h-1zM517 -1h1v3h-1zM518 -2h1v1h-1zM518 2h1v1h-1zM525 -1h1v3h-1zM526 -2h1v1h-1zM526 2h1v1h-1zM533 -1h1v3h-1zM534 -2h1v1h-1zM534 2h1v1h-1zM541 -1h1v3h-1zM542 -2h1v1h-1zM542 2h1v1h-1zM549 -1h1v3h-1zM550 -2h1v1h-1zM550 2h1v1h-1zM557 -1h1v3h-1zM558 -2h1v1h-1zM558 2h1v1h-1zM565 -1h1v3h-1zM566 -2h1v1h-1zM566 2h1v1h-1zM573 -1h1v3h-1zM574 -2h1v1h-1zM574 2h1v1h-1zM581 -1h1v3h-1zM582 -2h1v1h-1zM582 2h1v1h-1zM589 -1h1v3h-1zM590 -2h1v1h-1zM590 2h1v1h-1zM597 -1h1v3h-1zM598 -2h1v1h-1zM598 2h1v1h-1zM605 -1h1v3h-1zM606 -2h1v1h-1zM606 2h1v1h-1zM613 -1h1v3h-1zM614 -2h1v1h-1zM614 2h1v1h-1zM621 -1h1v3h-1zM622 -2h1v1h-1zM622 2h1v1h-1zM629 -1h1v3h-1zM630 -2h1v1h-1zM630 2h1v1h-1zM637 -1h1v3h-1zM638 -2h1v1h-1zM638 2h1v1h-1zM645 -1h1v3h-1zM646 -2h1v1h-1zM646 2h1v1h-1zM653 -1h1v3h-1zM654 -2h1v1h-1zM654 2h1v1h-1zM661 -1h1v3h-1zM662 -2h1v1h-1zM662 2h1v1h-1zM669 -1h1v3h-1zM670 -2h1v1h-1zM670 2h1v1h-1zM677 -1h1v3h-1zM678 -2h1v1h-1zM678 2h1v1h-1zM685 -1h1v3h-1zM686 -2h1v1h-1zM686 2h1v1h-1zM693 -1h1v3h-1zM694 -2h1v1h-1zM694 2h1v1h-1zM701 -1h1v3h-1zM702 -2h1v1h-1zM702 2h1v1h-1zM709 -1h1v3h-1zM710 -2h1v1h-1zM710 2h1v1h-1zM717 -1h1v3h-1zM718 -2h1v1h-1zM718 2h1v1h-1zM725 -1h1v3h-1zM726 -2h1v1h-1zM726 2h1v1h-1zM733 -1h1v3h-1zM734 -2h1v1h-1zM734 2h1v1h-1zM741 -1h1v3h-1zM742 -2h1v1h-1zM742 2h1v1h-1zM749 -1h1v3h-1zM750 -2h1v1h-1zM750 2h1v1h-1zM757 -1h1v3h-1zM758 -2h1v1h-1zM758 2h1v1h-1zM765 -1h1v3h-1zM766 -2h1v1h-1zM766 2h1v1h-1zM773 -1h1v3h-1zM774 -2h1v1h-1zM774 2h1v1h-1zM781 -1h1v3h-1zM782 -2h1v1h-1zM782 2h1v1h-1zM789 -1h1v3h-1zM790 -2h1v1h-1zM790 2h1v1h-1zM797 -1h1v3h-1zM798 -2h1v1h-1zM798 2h1v1h-1zM805 -1h1v3h-1zM806 -2h1v1h-1zM806 2h1v1h-1zM813 -1h1v3h-1zM814 -2h1v1h-1zM814 2h1v1h-1zM821 -1h1v3h-1zM822 -2h1v1h-1zM822 2h1v1h-1zM829 -1h1v3h-1zM830 -2h1v1h-1zM830 2h1v1h-1zM837 -1h1v3h-1zM838 -2h1v1h-1zM838 2h1v1h-1zM845 -1h1v3h-1zM846 -2h1v1h-1zM846 2h1v1h-1zM853 -1h1v3h-1zM854 -2h1v1h-1zM854 2h1v1h-1zM861 -1h1v3h-1zM862 -2h1v1h-1zM862 2h1v1h-1zM869 -1h1v3h-1zM870 -2h1v1h-1zM870 2h1v1h-1zM877 -1h1v3h-1zM878 -2h1v1h-1zM878 2h1v1h-1zM885 -1h1v3h-1zM886 -2h1v1h-1zM886 2h1v1h-1zM893 -1h1v3h-1zM894 -2h1v1h-1zM894 2h1v1h-1zM901 -1h1v3h-1zM902 -2h1v1h-1zM902 2h1v1h-1zM909 -1h1v3h-1zM910 -2h1v1h-1zM910 2h1v1h-1zM917 -1h1v3h-1zM918 -2h1v1h-1zM918 2h1v1h-1zM925 -1h1v3h-1zM926 -2h1v1h-1zM926 2h1v1h-1zM933 -1h1v3h-1zM934 -2h1v1h-1zM934 2h1v1h-1zM941 -1h1v3h-1zM942 -2h1v1h-1zM942 2h1v1h-1z"/><path d="M159 -3h1v1h-1zM159 3h1v1h-1zM167 -3h1v1h-1zM167 3h1v1h-1zM175 -3h1v1h-1zM175 3h1v1h-1zM183 -3h1v1h-1zM183 3h1v1h-1zM191 -3h1v1h-1zM191 3h1v1h-1zM199 -3h1v1h-1zM199 3h1v1h-1zM207 -3h1v1h-1zM207 3h1v1h-1zM215 -3h1v1h-1zM215 3h1v1h-1zM223 -3h1v1h-1zM223 3h1v1h-1zM231 -3h1v1h-1zM231 3h1v1h-1zM239 -3h1v1h-1zM239 3h1v1h-1zM247 -3h1v1h-1zM247 3h1v1h-1zM255 -3h1v1h-1zM255 3h1v1h-1zM263 -3h1v1h-1zM263 3h1v1h-1zM271 -3h1v1h-1zM271 3h1v1h-1zM279 -3h1v1h-1zM279 3h1v1h-1zM287 -3h1v1h-1zM287 3h1v1h-1zM295 -3h1v1h-1zM295 3h1v1h-1zM303 -3h1v1h-1zM303 3h1v1h-1zM311 -3h1v1h-1zM311 3h1v1h-1zM319 -3h1v1h-1zM319 3h1v1h-1zM327 -3h1v1h-1zM327 3h1v1h-1zM335 -3h1v1h-1zM335 3h1v1h-1zM343 -3h1v1h-1zM343 3h1v1h-1zM351 -3h1v1h-1zM351 3h1v1h-1zM359 -3h1v1h-1zM359 3h1v1h-1zM367 -3h1v1h-1zM367 3h1v1h-1zM375 -3h1v1h-1zM375 3h1v1h-1zM383 -3h1v1h-1zM383 3h1v1h-1zM391 -3h1v1h-1zM391 3h1v1h-1zM399 -3h1v1h-1zM399 3h1v1h-1zM407 -3h1v1h-1zM407 3h1v1h-1zM415 -3h1v1h-1zM415 3h1v1h-1zM423 -3h1v1h-1zM423 3h1v1h-1zM431 -3h1v1h-1zM431 3h1v1h-1zM439 -3h1v1h-1zM439 3h1v1h-1zM447 -3h1v1h-1zM447 3h1v1h-1zM455 -3h1v1h-1zM455 3h1v1h-1zM463 -3h1v1h-1zM463 3h1v1h-1zM471 -3h1v1h-1zM471 3h1v1h-1zM479 -3h1v1h-1zM479 3h1v1h-1zM487 -3h1v1h-1zM487 3h1v1h-1zM495 -3h1v1h-1zM495 3h1v1h-1zM503 -3h1v1h-1zM503 3h1v1h-1zM511 -3h1v1h-1zM511 3h1v1h-1zM519 -3h1v1h-1zM519 3h1v1h-1zM527 -3h1v1h-1zM527 3h1v1h-1zM535 -3h1v1h-1zM535 3h1v1h-1zM543 -3h1v1h-1zM543 3h1v1h-1zM551 -3h1v1h-1zM551 3h1v1h-1zM559 -3h1v1h-1zM559 3h1v1h-1zM567 -3h1v1h-1zM567 3h1v1h-1zM575 -3h1v1h-1zM575 3h1v1h-1zM583 -3h1v1h-1zM583 3h1v1h-1zM591 -3h1v1h-1zM591 3h1v1h-1zM599 -3h1v1h-1zM599 3h1v1h-1zM607 -3h1v1h-1zM607 3h1v1h-1zM615 -3h1v1h-1zM615 3h1v1h-1zM623 -3h1v1h-1zM623 3h1v1h-1zM631 -3h1v1h-1zM631 3h1v1h-1zM639 -3h1v1h-1zM639 3h1v1h-1zM647 -3h1v1h-1zM647 3h1v1h-1zM655 -3h1v1h-1zM655 3h1v1h-1zM663 -3h1v1h-1zM663 3h1v1h-1zM671 -3h1v1h-1zM671 3h1v1h-1zM679 -3h1v1h-1zM679 3h1v1h-1zM687 -3h1v1h-1zM687 3h1v1h-1zM695 -3h1v1h-1zM695 3h1v1h-1zM703 -3h1v1h-1zM703 3h1v1h-1zM711 -3h1v1h-1zM711 3h1v1h-1zM719 -3h1v1h-1zM719 3h1v1h-1zM727 -3h1v1h-1zM727 3h1v1h-1zM735 -3h1v1h-1zM735 3h1v1h-1zM743 -3h1v1h-1zM743 3h1v1h-1zM751 -3h1v1h-1zM751 3h1v1h-1zM759 -3h1v1h-1zM759 3h1v1h-1zM767 -3h1v1h-1zM767 3h1v1h-1zM775 -3h1v1h-1zM775 3h1v1h-1zM783 -3h1v1h-1zM783 3h1v1h-1zM791 -3h1v1h-1zM791 3h1v1h-1zM799 -3h1v1h-1zM799 3h1v1h-1zM807 -3h1v1h-1zM807 3h1v1h-1zM815 -3h1v1h-1zM815 3h1v1h-1zM823 -3h1v1h-1zM823 3h1v1h-1zM831 -3h1v1h-1zM831 3h1v1h-1zM839 -3h1v1h-1zM839 3h1v1h-1zM847 -3h1v1h-1zM847 3h1v1h-1zM855 -3h1v1h-1zM855 3h1v1h-1zM863 -3h1v1h-1zM863 3h1v1h-1zM871 -3h1v1h-1zM871 3h1v1h-1zM879 -3h1v1h-1zM879 3h1v1h-1zM887 -3h1v1h-1zM887 3h1v1h-1zM895 -3h1v1h-1zM895 3h1v1h-1zM903 -3h1v1h-1zM903 3h1v1h-1zM911 -3h1v1h-1zM911 3h1v1h-1zM919 -3h1v1h-1zM919 3h1v1h-1zM927 -3h1v1h-1zM927 3h1v1h-1zM935 -3h1v1h-1zM935 3h1v1h-1zM943 -3h1v1h-1zM943 3h1v1h-1z" fill-opacity="0.6"/></g>
<text x="491 499 505 508 515 521 530 536 542 548 554 563 566 570 576 588 596 604 611" y="204" fill="#000" font-size="11">RefSeqgenesfromNCBI</text>
<text x="69 76 89 96 116 123 127 134 138 145" y="219" fill="#0c0c78" font-size="13">efequrated</text>
<text transform="matrix(1 0 0 1.08 0 -17.520)" x="60 80 107" y="219" fill="#0c0c78" font-size="13">RSC</text>
<rect x="156" y="214" width="793" height="1" fill="#0c0c78"/>
<text x="445 452 458 464 466 468 474 480 483 485 491 497 503 509 516 522 528 534 540 546 552 558 567 569 578 585 591 593 599 605 608 610 613 615 624 631 635 638 640 646 648 654" y="235" fill="#000" font-size="11">Publications:SequencesinScientificArticles</text>
<text x="96 103 110 117 124 131 138 145" y="250" fill="#000" font-size="13">equences</text>
<text transform="matrix(1 0 0 1.08 0 -20.000)" x="87" y="250" fill="#000" font-size="13">S</text>
<text x="145" y="266" fill="#000" font-size="13">s</text>
<text transform="matrix(1 0 0 1.08 0 -21.280)" x="118 127 136" y="266" fill="#000" font-size="13">SNP</text>
<text x="418 425 432 452 459 466 473 480 484 491 498 505 516 533 540 544 565 569 576 583 603 610 630 650 653 660 667 674 681 688 692 699 706 713 720 723 730" y="283" fill="#005a00" font-size="13">enehenotypes-arkreenaneisease-causing</text>
<text transform="matrix(1 0 0 1.08 0 -22.640)" x="368 378 389 393 408 443 524 555 594 621 641" y="283" fill="#005a00" font-size="13">OMIMGPDGCBD</text>
<text x="124 131 138 145" y="297" fill="#005a00" font-size="13">enes</text>
<text transform="matrix(1 0 0 1.08 0 -23.760)" x="74 84 95 99 114" y="297" fill="#005a00" font-size="13">OMIMG</text>
<rect x="156" y="285" width="793" height="15" fill="#bebebe"/>
<path d="M515 0L515 1237L197 1010L197 1180L530 1409L696 1409L696 0Z" transform="matrix(0.005371 0 0 -0.005371 650 313)" fill="#000"/>
<text x="436 443 449 455 459 465 474 480 486 492 495 497 506 513 519 523 525 531 537 540 549 552 556 562 574 580 586 593 601 611 615 621 623 629 635 641 656 662" y="313" fill="#000" font-size="11">ShortGeneticVariantsfromdbSNPrelease55</text>
<path d="M515 0L515 1237L197 1010L197 1180L530 1409L696 1409L696 0Z" transform="matrix(0.006348 0 0 -0.006348 127 328)" fill="#000"/>
<text x="35 42 53 64 71 82 89 123 134 141 148" y="328" fill="#000" font-size="13">ommondb(55)</text>
<text transform="matrix(1 0 0 1.08 0 -26.240)" x="26 96 105 114" y="328" fill="#000" font-size="13">CSNP</text>
<path d="M515 0L515 1237L197 1010L197 1180L530 1409L696 1409L696 0Z" transform="matrix(0.006348 0 0 -0.006348 587 345)" fill="#000"/>
<path d="M515 0L515 1237L197 1010L197 1180L530 1409L696 1409L696 0Z" transform="matrix(0.006348 0 0 -0.006348 820 345)" fill="#000"/>
<text x="276 283 290 310 317 324 328 335 342 349 352 359 370 373 384 391 402 406 409 416 423 430 437 448 452 456 463 505 543 547 554 561 572 579 594 601 608 615 626 633 640 651 658 661 668 675 683 690 697 708 715 722 729 736 740 751 764 771 788 795 806 813 827 834" y="345" fill="#000" font-size="13">enexpressionin54tissuesfromx-seqof7382samples,948donors(8,ug209)</text>
<text transform="matrix(1 0 0 1.08 0 -27.600)" x="266 301 478 488 496 516 525 534 755 779" y="345" fill="#000" font-size="13">GEGTERNAVA</text>
<text x="145" y="381" fill="#000" font-size="13">4</text>
<text transform="matrix(1 0 0 1.08 0 -30.480)" x="110 118 127 136" y="381" fill="#000" font-size="13">THAP</text>
<rect x="156" y="348" width="378" height="53" fill="#fff"/>
<rect x="156.5" y="348.5" width="377" height="52" fill="none" stroke="#efefef" stroke-width="1"/>
<rect x="156" y="352" width="5" height="48" fill="#FFA54F"/>
<rect x="163" y="354" width="5" height="46" fill="#EE9A00"/>
<rect x="170" y="358" width="5" height="42" fill="#8FBC8F"/>
<rect x="177" y="352" width="5" height="48" fill="#8B1C62"/>
<rect x="184" y="353" width="5" height="47" fill="#EE6A50"/>
<rect x="191" y="351" width="5" height="49" fill="#FF0000"/>
<rect x="198" y="350" width="5" height="50" fill="#CDB79E"/>
<rect x="205" y="361" width="5" height="39" fill="#EEEE00"/>
<rect x="212" y="358" width="5" height="42" fill="#EEEE00"/>
<rect x="219" y="357" width="5" height="43" fill="#EEEE00"/>
<rect x="226" y="354" width="5" height="46" fill="#EEEE00"/>
<rect x="233" y="354" width="5" height="46" fill="#EEEE00"/>
<rect x="240" y="356" width="5" height="44" fill="#EEEE00"/>
<rect x="247" y="356" width="5" height="44" fill="#EEEE00"/>
<rect x="254" y="363" width="5" height="37" fill="#EEEE00"/>
<rect x="261" y="358" width="5" height="42" fill="#EEEE00"/>
<rect x="268" y="356" width="5" height="44" fill="#EEEE00"/>
<rect x="275" y="360" width="5" height="40" fill="#EEEE00"/>
<rect x="282" y="360" width="5" height="40" fill="#EEEE00"/>
<rect x="289" y="360" width="5" height="40" fill="#EEEE00"/>
<rect x="296" y="353" width="5" height="47" fill="#00CDCD"/>
<rect x="303" y="352" width="5" height="48" fill="#EE82EE"/>
<rect x="310" y="350" width="5" height="50" fill="#9AC0CD"/>
<rect x="317" y="350" width="5" height="50" fill="#EED5D2"/>
<rect x="324" y="349" width="5" height="51" fill="#EED5D2"/>
<rect x="331" y="351" width="5" height="49" fill="#CDB79E"/>
<rect x="338" y="353" width="5" height="47" fill="#EEC591"/>
<rect x="345" y="351" width="5" height="49" fill="#8B7355"/>
<rect x="352" y="352" width="5" height="48" fill="#8B7355"/>
<rect x="359" y="351" width="5" height="49" fill="#CDAA7D"/>
<rect x="366" y="351" width="5" height="49" fill="#EED5D2"/>
<rect x="373" y="355" width="5" height="45" fill="#B452CD"/>
<rect x="380" y="356" width="5" height="44" fill="#7A378B"/>
<rect x="387" y="353" width="5" height="47" fill="#CDB79E"/>
<rect x="394" y="351" width="5" height="49" fill="#CDB79E"/>
<rect x="401" y="363" width="5" height="37" fill="#CDB79E"/>
<rect x="408" y="353" width="5" height="47" fill="#9ACD32"/>
<rect x="415" y="355" width="5" height="45" fill="#CDB79E"/>
<rect x="422" y="350" width="5" height="50" fill="#7A67EE"/>
<rect x="429" y="352" width="5" height="48" fill="#FFD700"/>
<rect x="436" y="350" width="5" height="50" fill="#FFB6C1"/>
<rect x="443" y="363" width="5" height="37" fill="#CD9B1D"/>
<rect x="450" y="352" width="5" height="48" fill="#B4EEB4"/>
<rect x="457" y="351" width="5" height="49" fill="#D9D9D9"/>
<rect x="464" y="352" width="5" height="48" fill="#3A5FCD"/>
<rect x="471" y="351" width="5" height="49" fill="#1E90FF"/>
<rect x="478" y="356" width="5" height="44" fill="#CDB79E"/>
<rect x="485" y="358" width="5" height="42" fill="#CDB79E"/>
<rect x="492" y="355" width="5" height="45" fill="#FFD39B"/>
<rect x="499" y="348" width="5" height="52" fill="#A6A6A6"/>
<rect x="506" y="352" width="5" height="48" fill="#008B45"/>
<rect x="513" y="349" width="5" height="51" fill="#EED5D2"/>
<rect x="520" y="351" width="5" height="49" fill="#EED5D2"/>
<rect x="527" y="370" width="5" height="30" fill="#FF00FF"/>
<rect x="156" y="401" width="793" height="2" fill="#0c0c78"/>
<text x="290 306 313 329 351 358 362 373 387 391 395 402 421 428 435 442 462 469 476 493 500 504 507 514 534 541 548 555 558 565 569 576 580 600 603 610 621 628 635 639 646 654 661 672 683 690 697 700 707 710 713 720 727 738 742 746 753" y="418" fill="#000" font-size="13">327cark(ftenoundearctiveegulatorylements)on7celllinesfrom</text>
<text transform="matrix(1 0 0 1.08 0 -33.440)" x="281 297 320 340 377 413 453 484 525 591 768 777 786 795 805 814" y="418" fill="#000" font-size="13">HKAMOFNAREENCODE</text>
<text x="20 27 34 41 45 52 72 88 95 111" y="432" fill="#000" font-size="13">ayered327c</text>
<text transform="matrix(1 0 0 1.08 0 -34.560)" x="13 63 79 102" y="432" fill="#000" font-size="13">LHKA</text>
<rect x="156" y="448" width="793" height="1" fill="#ffe08a"/>
<rect x="156" y="449" width="106" height="1" fill="#1a1060"/>
<rect x="262" y="449" width="687" height="1" fill="#344e4c"/>
<text x="116 123 127 134 145" y="463" fill="#3c3c96" font-size="13">4.88_</text>
<path d="M515 0L515 1237L197 1010L197 1180L530 1409L696 1409L696 0Z" transform="matrix(0.006348 0 0 -0.006348 405 464)" fill="#3c3c96"/>
<text x="412 419 430 437 444 448 452 459 466 470 477 481 488 508 515 522 529 538 541 548 568 575 582 589 596 600 607 614 618 621 628 639 646 666 673 680 683" y="464" fill="#3c3c96" font-size="13">00vertebratesasewiseonservationbyhylo</text>
<text transform="matrix(1 0 0 1.08 0 -37.120)" x="499 559 657 690" y="464" fill="#3c3c96" font-size="13">BCPP</text>
<path d="M515 0L515 1237L197 1010L197 1180L530 1409L696 1409L696 0Z" transform="matrix(0.006348 0 0 -0.006348 13 488)" fill="#3c3c96"/>
<text x="20 27 47 54 58 62 79 86 93" y="488" fill="#3c3c96" font-size="13">00ert.ons</text>
<text transform="matrix(1 0 0 1.08 0 -39.040)" x="38 70" y="488" fill="#3c3c96" font-size="13">VC</text>
<text x="119 123 130 134 145" y="513" fill="#963c3c" font-size="13">-4.5_</text>
<path d="M268,492.5 L306,492.5" stroke="#5050ff" stroke-width="1" fill="none" stroke-opacity="0.55"/>
<path d="M272,494.5 L304,494.5" stroke="#5050ff" stroke-width="1" fill="none" stroke-opacity="0.55"/>
<path d="M266,493.5 L273,492 L275,492.6 L271,493.5 L275,494.4 L273,495 Z" fill="#0000ff" fill-opacity="1"/>
<path d="M302,494 L309,494 L309,495.2 L303,495.2 Z" fill="#0000ff" fill-opacity="1"/>
<path d="M300,492.5 L306,492.5 L309,494 L302,494 Z" fill="#3030ff" fill-opacity="0.5"/>
<rect x="287.5" y="493" width="15.5" height="1" fill="#c4c4ff"/>
<path d="M318,493.5 L327,493.5 L329,492.5 L347,492.5 L349,493.5 L357,493.5" stroke="#ff0000" stroke-width="1" fill="none" stroke-opacity="0.75"/>
<path d="M372,492.5 L411,492.5" stroke="#ff2020" stroke-width="1" fill="none" stroke-opacity="0.6"/>
<path d="M372,493.5 L382,493.5 M399,493.5 L411,493.5" stroke="#a0a020" stroke-width="1" fill="none" stroke-opacity="0.45"/>
<path d="M477,495.5 L491,492.5 L500,492.5 L516,495.5" stroke="#ff0000" stroke-width="1.3" fill="none" stroke-opacity="1"/>
<path d="M486,494.8 L494,493.6 L498,493.6 L507,494.8" stroke="#ff8080" stroke-width="1" fill="none" stroke-opacity="0.8"/>
<path d="M479,495.6 L514,495.6" stroke="#ff2020" stroke-width="1" fill="none" stroke-opacity="0.45"/>
<path d="M476,496.5 L517,496.5" stroke="#a0e8a0" stroke-width="1" fill="none" stroke-opacity="0.45"/>
<rect x="491.5" y="496.6" width="7" height="1.3" fill="#00e000"/>
<path d="M530,492.5 L567,492.5" stroke="#90f090" stroke-width="1" fill="none" stroke-opacity="0.45"/>
<rect x="545" y="491.5" width="6" height="2" fill="#00e000"/>
<path d="M583,493 L626,493" stroke="#4040ff" stroke-width="1" fill="none" stroke-opacity="0.8"/>
<path d="M583,493 L590,492 L591,494 Z" fill="#0000ff" fill-opacity="1"/>
<path d="M619,492.6 L626,493.2 L626,494.2 L620,494 Z" fill="#0000ff" fill-opacity="1"/>
<path d="M636,492.5 L674,492.5" stroke="#ff4040" stroke-width="1" fill="none" stroke-opacity="0.6"/>
<path d="M688,492.5 L727,492.5" stroke="#ff4040" stroke-width="1" fill="none" stroke-opacity="0.6"/>
<path d="M741,493.5 L750,493.5 L752,492.5 L770,492.5 L772,493.5 L780,493.5" stroke="#ff0000" stroke-width="1" fill="none" stroke-opacity="0.75"/>
<path d="M797,492.5 L835,492.5" stroke="#5050ff" stroke-width="1" fill="none" stroke-opacity="0.55"/>
<path d="M801,494.5 L833,494.5" stroke="#5050ff" stroke-width="1" fill="none" stroke-opacity="0.55"/>
<path d="M795,493.5 L802,492 L804,492.6 L800,493.5 L804,494.4 L802,495 Z" fill="#0000ff" fill-opacity="1"/>
<path d="M831,494 L838,494 L838,495.2 L832,495.2 Z" fill="#0000ff" fill-opacity="1"/>
<path d="M829,492.5 L835,492.5 L838,494 L831,494 Z" fill="#3030ff" fill-opacity="0.5"/>
<rect x="816.5" y="493" width="15.5" height="1" fill="#c4c4ff"/>
<path d="M794,495.5 L836,495.5" stroke="#ff4040" stroke-width="1" fill="none" stroke-opacity="0.55"/>
<path d="M796,496.5 L835,496.5" stroke="#a0a020" stroke-width="1" fill="none" stroke-opacity="0.45"/>
<path d="M856,487.5 L884,487.5 Q889.5,487.8 890.5,490 M857,490.6 L886,490.6" stroke="#2828ff" stroke-width="1" fill="none" stroke-opacity="0.8"/>
<path d="M848,489.3 L856,487.4 L860,488.1 L854,489.4 L860,490.6 L856,491.4 Z" fill="#0000ff" fill-opacity="1"/>
<path d="M871,489.3 L884,489.3" stroke="#3030ff" stroke-width="1" fill="none" stroke-opacity="0.55"/>
<rect x="885.5" y="489.8" width="5.5" height="2.2" fill="#0000ff"/>
<path d="M902,492.5 L944,492.5" stroke="#6060ff" stroke-width="1" fill="none" stroke-opacity="0.5"/>
<path d="M902,492.5 L910,491.9 L910,493.1 Z" fill="#0000ff" fill-opacity="0.6"/>
<path d="M934,491.9 L944,492.2 L944,493 L934,493.1 Z" fill="#0000ff" fill-opacity="0.5"/>
<path d="M515 0L515 1237L197 1010L197 1180L530 1409L696 1409L696 0Z" transform="matrix(0.006348 0 0 -0.006348 568 530)" fill="#0c0c78"/>
<text x="456 463 466 470 473 493 496 499 506 513 524 531 538 542 553 560 575 582 602 609 613 617 624 631 635 642 646 653" y="530" fill="#0c0c78" font-size="13">ultizlignmentsof00ertebrates</text>
<text transform="matrix(1 0 0 1.08 0 -42.400)" x="445 484 593" y="530" fill="#0c0c78" font-size="13">MAV</text>
<text x="131 138 145" y="544" fill="#e0901e" font-size="13">aps</text>
<text transform="matrix(1 0 0 1.08 0 -43.520)" x="121" y="544" fill="#e0901e" font-size="13">G</text>
<text x="120 127 138 145" y="559" fill="#0c0c78" font-size="13">uman</text>
<text transform="matrix(1 0 0 1.08 0 -44.720)" x="111" y="559" fill="#0c0c78" font-size="13">H</text>
<text transform="matrix(1 0 0 1.08 0 -44.720)" x="175" y="559" fill="#0c0c78" font-size="13">G</text>
<text transform="matrix(1 0 0 1.08 0 -44.720)" x="228.433" y="559" fill="#0c0c78" font-size="13">A</text>
<text transform="matrix(1 0 0 1.08 0 -44.720)" x="280.867" y="559" fill="#0c0c78" font-size="13">G</text>
<text transform="matrix(1 0 0 1.08 0 -44.720)" x="334.3" y="559" fill="#0c0c78" font-size="13">A</text>
<text transform="matrix(1 0 0 1.08 0 -44.720)" x="387.233" y="559" fill="#0c0c78" font-size="13">A</text>
<text transform="matrix(1 0 0 1.08 0 -44.720)" x="440.167" y="559" fill="#0c0c78" font-size="13">A</text>
<text transform="matrix(1 0 0 1.08 0 -44.720)" x="493.1" y="559" fill="#0c0c78" font-size="13">A</text>
<text transform="matrix(1 0 0 1.08 0 -44.720)" x="546.533" y="559" fill="#0c0c78" font-size="13">T</text>
<text transform="matrix(1 0 0 1.08 0 -44.720)" x="598.467" y="559" fill="#0c0c78" font-size="13">G</text>
<text transform="matrix(1 0 0 1.08 0 -44.720)" x="651.9" y="559" fill="#0c0c78" font-size="13">A</text>
<text transform="matrix(1 0 0 1.08 0 -44.720)" x="704.833" y="559" fill="#0c0c78" font-size="13">A</text>
<text transform="matrix(1 0 0 1.08 0 -44.720)" x="757.767" y="559" fill="#0c0c78" font-size="13">A</text>
<text transform="matrix(1 0 0 1.08 0 -44.720)" x="810.2" y="559" fill="#0c0c78" font-size="13">G</text>
<text transform="matrix(1 0 0 1.08 0 -44.720)" x="863.133" y="559" fill="#0c0c78" font-size="13">G</text>
<text transform="matrix(1 0 0 1.08 0 -44.720)" x="916.067" y="559" fill="#0c0c78" font-size="13">G</text>
<text x="117 124 131 138 145" y="574" fill="#0c0c78" font-size="13">hesus</text>
<text transform="matrix(1 0 0 1.08 0 -45.920)" x="108" y="574" fill="#0c0c78" font-size="13">R</text>
<text transform="matrix(1 0 0 1.08 0 -45.920)" x="175" y="574" fill="#0c0c78" font-size="13">G</text>
<text transform="matrix(1 0 0 1.08 0 -45.920)" x="228.433" y="574" fill="#0c0c78" font-size="13">A</text>
<text transform="matrix(1 0 0 1.08 0 -45.920)" x="280.867" y="574" fill="#0c0c78" font-size="13">G</text>
<text transform="matrix(1 0 0 1.08 0 -45.920)" x="334.3" y="574" fill="#0c0c78" font-size="13">A</text>
<text transform="matrix(1 0 0 1.08 0 -45.920)" x="387.233" y="574" fill="#0c0c78" font-size="13">A</text>
<text transform="matrix(1 0 0 1.08 0 -45.920)" x="440.167" y="574" fill="#0c0c78" font-size="13">A</text>
<text transform="matrix(1 0 0 1.08 0 -45.920)" x="493.1" y="574" fill="#0c0c78" font-size="13">A</text>
<text transform="matrix(1 0 0 1.08 0 -45.920)" x="546.533" y="574" fill="#0c0c78" font-size="13">T</text>
<text transform="matrix(1 0 0 1.08 0 -45.920)" x="598.467" y="574" fill="#0c0c78" font-size="13">G</text>
<text transform="matrix(1 0 0 1.08 0 -45.920)" x="651.9" y="574" fill="#0c0c78" font-size="13">A</text>
<text transform="matrix(1 0 0 1.08 0 -45.920)" x="704.833" y="574" fill="#0c0c78" font-size="13">A</text>
<text transform="matrix(1 0 0 1.08 0 -45.920)" x="757.767" y="574" fill="#0c0c78" font-size="13">A</text>
<text transform="matrix(1 0 0 1.08 0 -45.920)" x="810.7" y="574" fill="#7474a4" font-size="13">A</text>
<text transform="matrix(1 0 0 1.08 0 -45.920)" x="863.133" y="574" fill="#0c0c78" font-size="13">G</text>
<text transform="matrix(1 0 0 1.08 0 -45.920)" x="916.067" y="574" fill="#0c0c78" font-size="13">G</text>
<text x="124 131 138 145" y="589" fill="#005a00" font-size="13">ouse</text>
<text transform="matrix(1 0 0 1.08 0 -47.120)" x="113" y="589" fill="#005a00" font-size="13">M</text>
<text x="176" y="590" fill="#6e6ea0" font-size="13">=</text>
<text x="228.933" y="590" fill="#6e6ea0" font-size="13">=</text>
<text x="281.867" y="590" fill="#6e6ea0" font-size="13">=</text>
<text x="334.8" y="590" fill="#6e6ea0" font-size="13">=</text>
<text x="387.733" y="590" fill="#6e6ea0" font-size="13">=</text>
<text x="440.667" y="590" fill="#6e6ea0" font-size="13">=</text>
<text x="493.6" y="590" fill="#6e6ea0" font-size="13">=</text>
<text x="546.533" y="590" fill="#6e6ea0" font-size="13">=</text>
<text x="599.467" y="590" fill="#6e6ea0" font-size="13">=</text>
<text x="652.4" y="590" fill="#6e6ea0" font-size="13">=</text>
<text x="705.333" y="590" fill="#6e6ea0" font-size="13">=</text>
<text x="758.267" y="590" fill="#6e6ea0" font-size="13">=</text>
<text x="811.2" y="590" fill="#6e6ea0" font-size="13">=</text>
<text x="864.133" y="590" fill="#6e6ea0" font-size="13">=</text>
<text x="917.067" y="590" fill="#6e6ea0" font-size="13">=</text>
<text x="138 145" y="604" fill="#0c0c78" font-size="13">og</text>
<text transform="matrix(1 0 0 1.08 0 -48.320)" x="129" y="604" fill="#0c0c78" font-size="13">D</text>
<text x="176" y="605" fill="#6e6ea0" font-size="13">=</text>
<text x="228.933" y="605" fill="#6e6ea0" font-size="13">=</text>
<text x="281.867" y="605" fill="#6e6ea0" font-size="13">=</text>
<text x="334.8" y="605" fill="#6e6ea0" font-size="13">=</text>
<text x="387.733" y="605" fill="#6e6ea0" font-size="13">=</text>
<text x="440.667" y="605" fill="#6e6ea0" font-size="13">=</text>
<text x="493.6" y="605" fill="#6e6ea0" font-size="13">=</text>
<text x="546.533" y="605" fill="#6e6ea0" font-size="13">=</text>
<text x="599.467" y="605" fill="#6e6ea0" font-size="13">=</text>
<text x="652.4" y="605" fill="#6e6ea0" font-size="13">=</text>
<text x="705.333" y="605" fill="#6e6ea0" font-size="13">=</text>
<text x="758.267" y="605" fill="#6e6ea0" font-size="13">=</text>
<text x="811.2" y="605" fill="#6e6ea0" font-size="13">=</text>
<text x="864.133" y="605" fill="#6e6ea0" font-size="13">=</text>
<text x="917.067" y="605" fill="#6e6ea0" font-size="13">=</text>
<text x="110 113 120 127 134 141 148" y="619" fill="#005a00" font-size="13">lephant</text>
<text transform="matrix(1 0 0 1.08 0 -49.520)" x="101" y="619" fill="#005a00" font-size="13">E</text>
<text x="176" y="620" fill="#6e6ea0" font-size="13">=</text>
<text x="228.933" y="620" fill="#6e6ea0" font-size="13">=</text>
<text x="281.867" y="620" fill="#6e6ea0" font-size="13">=</text>
<text x="334.8" y="620" fill="#6e6ea0" font-size="13">=</text>
<text x="387.733" y="620" fill="#6e6ea0" font-size="13">=</text>
<text x="440.667" y="620" fill="#6e6ea0" font-size="13">=</text>
<text x="493.6" y="620" fill="#6e6ea0" font-size="13">=</text>
<text x="546.533" y="620" fill="#6e6ea0" font-size="13">=</text>
<text x="599.467" y="620" fill="#6e6ea0" font-size="13">=</text>
<text x="652.4" y="620" fill="#6e6ea0" font-size="13">=</text>
<text x="705.333" y="620" fill="#6e6ea0" font-size="13">=</text>
<text x="758.267" y="620" fill="#6e6ea0" font-size="13">=</text>
<text x="811.2" y="620" fill="#6e6ea0" font-size="13">=</text>
<text x="864.133" y="620" fill="#6e6ea0" font-size="13">=</text>
<text x="917.067" y="620" fill="#6e6ea0" font-size="13">=</text>
<text x="114 121 124 131 138 145" y="634" fill="#005a00" font-size="13">hicken</text>
<text transform="matrix(1 0 0 1.08 0 -50.720)" x="105" y="634" fill="#005a00" font-size="13">C</text>
<text x="176" y="635" fill="#6e6ea0" font-size="13">=</text>
<text x="228.933" y="635" fill="#6e6ea0" font-size="13">=</text>
<text x="281.867" y="635" fill="#6e6ea0" font-size="13">=</text>
<text x="334.8" y="635" fill="#6e6ea0" font-size="13">=</text>
<text x="387.733" y="635" fill="#6e6ea0" font-size="13">=</text>
<text x="440.667" y="635" fill="#6e6ea0" font-size="13">=</text>
<text x="493.6" y="635" fill="#6e6ea0" font-size="13">=</text>
<text x="546.533" y="635" fill="#6e6ea0" font-size="13">=</text>
<text x="599.467" y="635" fill="#6e6ea0" font-size="13">=</text>
<text x="652.4" y="635" fill="#6e6ea0" font-size="13">=</text>
<text x="705.333" y="635" fill="#6e6ea0" font-size="13">=</text>
<text x="758.267" y="635" fill="#6e6ea0" font-size="13">=</text>
<text x="811.2" y="635" fill="#6e6ea0" font-size="13">=</text>
<text x="864.133" y="635" fill="#6e6ea0" font-size="13">=</text>
<text x="917.067" y="635" fill="#6e6ea0" font-size="13">=</text>
<text x="93 100 104 108 115 122 125 132 139 142 145" y="649" fill="#0c0c78" font-size="13">_tropicalis</text>
<text transform="matrix(1 0 0 1.08 0 -51.920)" x="84" y="649" fill="#0c0c78" font-size="13">X</text>
<text x="176" y="650" fill="#6e6ea0" font-size="13">=</text>
<text x="228.933" y="650" fill="#6e6ea0" font-size="13">=</text>
<text x="281.867" y="650" fill="#6e6ea0" font-size="13">=</text>
<text x="334.8" y="650" fill="#6e6ea0" font-size="13">=</text>
<text x="387.733" y="650" fill="#6e6ea0" font-size="13">=</text>
<text x="440.667" y="650" fill="#6e6ea0" font-size="13">=</text>
<text x="493.6" y="650" fill="#6e6ea0" font-size="13">=</text>
<text x="546.533" y="650" fill="#6e6ea0" font-size="13">=</text>
<text x="599.467" y="650" fill="#6e6ea0" font-size="13">=</text>
<text x="652.4" y="650" fill="#6e6ea0" font-size="13">=</text>
<text x="705.333" y="650" fill="#6e6ea0" font-size="13">=</text>
<text x="758.267" y="650" fill="#6e6ea0" font-size="13">=</text>
<text x="811.2" y="650" fill="#6e6ea0" font-size="13">=</text>
<text x="864.133" y="650" fill="#6e6ea0" font-size="13">=</text>
<text x="917.067" y="650" fill="#6e6ea0" font-size="13">=</text>
<text x="106 113 120 124 131 135 138 145" y="664" fill="#005a00" font-size="13">ebrafish</text>
<text transform="matrix(1 0 0 1.08 0 -53.120)" x="98" y="664" fill="#005a00" font-size="13">Z</text>
<text x="176" y="665" fill="#6e6ea0" font-size="13">=</text>
<text x="228.933" y="665" fill="#6e6ea0" font-size="13">=</text>
<text x="281.867" y="665" fill="#6e6ea0" font-size="13">=</text>
<text x="334.8" y="665" fill="#6e6ea0" font-size="13">=</text>
<text x="387.733" y="665" fill="#6e6ea0" font-size="13">=</text>
<text x="440.667" y="665" fill="#6e6ea0" font-size="13">=</text>
<text x="493.6" y="665" fill="#6e6ea0" font-size="13">=</text>
<text x="546.533" y="665" fill="#6e6ea0" font-size="13">=</text>
<text x="599.467" y="665" fill="#6e6ea0" font-size="13">=</text>
<text x="652.4" y="665" fill="#6e6ea0" font-size="13">=</text>
<text x="705.333" y="665" fill="#6e6ea0" font-size="13">=</text>
<text x="758.267" y="665" fill="#6e6ea0" font-size="13">=</text>
<text x="811.2" y="665" fill="#6e6ea0" font-size="13">=</text>
<text x="864.133" y="665" fill="#6e6ea0" font-size="13">=</text>
<text x="917.067" y="665" fill="#6e6ea0" font-size="13">=</text>
<path d="M515 0L515 1237L197 1010L197 1180L530 1409L696 1409L696 0Z" transform="matrix(0.005859 0 0 -0.005859 786.5 544)" fill="#e0901e"/>
<rect x="790" y="561" width="1" height="14" fill="#e0901e"/>
<text x="450 457 464 471 478 482 485 492 512 515 522 533 540 547 551 562 569 589 596 603 610 617 632 639 646 653 660" y="680" fill="#000" font-size="13">epeatinglementsbyepeatasker</text>
<text transform="matrix(1 0 0 1.08 0 -54.400)" x="441 503 580 621" y="680" fill="#000" font-size="13">RERM</text>
<text x="77 84 91 98 105 120 127 134 141 148" y="694" fill="#000" font-size="13">epeatasker</text>
<text transform="matrix(1 0 0 1.08 0 -55.520)" x="68 109" y="694" fill="#000" font-size="13">RM</text>
</svg>
</body></html>
